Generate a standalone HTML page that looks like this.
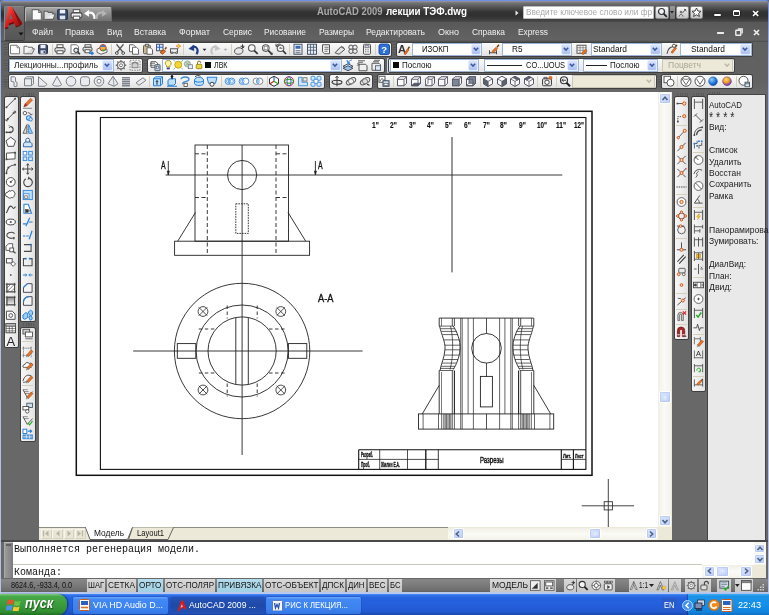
<!DOCTYPE html>
<html><head><meta charset="utf-8"><title>AutoCAD 2009</title>
<style>
*{box-sizing:border-box;margin:0;padding:0}
html,body{width:769px;height:615px;overflow:hidden}
body{position:relative;background:#686868;font-family:"Liberation Sans",sans-serif;font-size:9px;color:#000}
#root{position:absolute;left:0;top:0;width:769px;height:615px;overflow:hidden;will-change:transform}
.a{position:absolute}
.t{position:absolute;white-space:nowrap;transform-origin:0 0;display:block}
.tb{background:linear-gradient(#fafafa,#ededed 60%,#e2e2e2);border-radius:1.5px;box-shadow:0 0 0 1px #3f3f3f}
.tbv{background:linear-gradient(90deg,#f6f6f6,#ececec 60%,#e2e2e2);border-radius:1.5px;box-shadow:0 0 0 1px #3f3f3f}
.grip{background:repeating-linear-gradient(#4b4b4b 0,#4b4b4b 1.3px,#666 1.3px,#666 2.6px);border-radius:1px;opacity:.55}
.griph{background:repeating-linear-gradient(90deg,#4b4b4b 0,#4b4b4b 1.3px,#666 1.3px,#666 2.6px);border-radius:1px;opacity:.55}
.sep{background:#d4cfbb}
.cb{background:#fff;border:1px solid #9db6d8}
.cbd{background:#ece9d8;border:1px solid #c9c7ba}
.btn{background:linear-gradient(#d9e4fd,#c0d1f8 50%,#adc2f2);border:1px solid #e6edfc;border-radius:2px}
.sbtn{background:linear-gradient(135deg,#dbe5fd,#bfd0f8);border:1px solid #fff;border-radius:2px;box-shadow:0 0 0 .5px #a9bcea inset}
.st{background:linear-gradient(#d8d8d8,#c6c6c6);}
.st.on{background:linear-gradient(#b4dcec,#9fd0e4)}
</style></head>
<body>
<div id="root">
<div class="a" style="left:0px;top:0px;width:769px;height:594px;background:linear-gradient(#6f8fe6 0,#7f9fe8 4%,#a9bbe8 10%,#b4c2e6 100%);border-radius:4px 4px 0 0"></div>
<div class="a" style="left:1px;top:1px;width:767.3px;height:591.5px;background:#686868;border-radius:3px 3px 0 0"></div>
<div class="a" style="left:1px;top:1px;width:767.3px;height:21px;background:linear-gradient(#96989d 0,#737476 9%,#565657 28%,#343434 52%,#303030 68%,#3a3a3a 85%,#4b4b4b 100%);border-radius:3px 3px 0 0"></div>
<div class="a" style="left:1px;top:22px;width:767.3px;height:19.5px;background:linear-gradient(#585858,#5d5d5d 40%,#626262 90%,#4a4a4a 100%)"></div>
<div class="a" style="left:1px;top:41.5px;width:767.3px;height:50.5px;background:linear-gradient(#606060,#626262 80%,#686868)"></div>
<div class="a" style="left:4px;top:5.5px;width:20.5px;height:35px;background:linear-gradient(#7a7a7a,#5f5f5f 60%,#555);border:1px solid #868686;border-right-color:#444;border-bottom-color:#3e3e3e;border-radius:2px"></div>
<svg class="a" style="left:4px;top:5px;" width="20" height="26" viewBox="0 0 20 26"><defs><linearGradient id="ra" x1="0" y1="0" x2="1" y2="1"><stop offset="0" stop-color="#ff6a58"/><stop offset=".45" stop-color="#e02020"/><stop offset="1" stop-color="#a00c0c"/></linearGradient></defs><path d="M8 1.700L18.300 18L15 20.300Z" fill="#8e0a0a"/><path d="M4.800 18.300L9.800 16.500L10.600 18.300L4.500 20.600Z" fill="#7a0606"/><path d="M4.300 1.700L8 1.700L15 20.300L11.500 21.600L9.800 16.500L4.800 18.300L4 22L.7 23Z" fill="url(#ra)"/><path d="M6.300 8L8.500 13.500L5.300 14.700Z" fill="#6a6a6a"/><path d="M.7 23L4 22L4.500 23.300L1.500 24.300Z" fill="#7a0606"/><path d="M11.500 21.600L15 20.300L18.300 18L18.300 19L15.200 21.300L11.800 22.600Z" fill="#6e0505"/></svg>
<svg class="a" style="left:17.5px;top:31.5px;" width="6" height="4" viewBox="0 0 6 4"><path d="M.5 .5h5l-2.500 3z" fill="#111"/></svg>
<div class="a" style="left:25px;top:6.5px;width:86.5px;height:15.5px;background:linear-gradient(#a7a7a7,#8c8c8c 45%,#717171);border:1px solid #b9b9b9;border-bottom-color:#5a5a5a;border-right-color:#6a6a6a;border-radius:2px 2px 0 0"></div>
<svg class="a" style="left:29.5px;top:7.7px;" width="13" height="13" viewBox="0 0 12 12"><path d="M2 1.500h6l2.500 2.500v7h-8.500z" stroke="#6b6b6b" fill="#fbfbfb"/><path d="M8 1.500v2.500h2.500" stroke="#777" fill="none"/></svg>
<svg class="a" style="left:42.5px;top:7.7px;" width="13" height="13" viewBox="0 0 12 12"><path d="M1 10.500l1.800-5h8.500l-2 5z" stroke="#606060" fill="#efefef"/><path d="M1 10.500v-7.500h3l1 1h4v1.500" stroke="#606060" fill="#dcdcdc"/></svg>
<svg class="a" style="left:56.0px;top:7.7px;" width="13" height="13" viewBox="0 0 12 12"><rect x="1.500" y="1.500" width="9" height="9" rx="1" stroke="#27344f" fill="#3a4b70"/><rect x="3.500" y="1.500" width="5" height="3.500" fill="#eef2f8"/><rect x="3.500" y="7" width="5" height="3.500" fill="#dde4ef"/></svg>
<svg class="a" style="left:69.5px;top:7.7px;" width="13" height="13" viewBox="0 0 12 12"><rect x="3" y="1.500" width="6" height="3" stroke="#555" fill="#fff"/><rect x="1" y="4.500" width="10" height="4.500" rx="1.500" stroke="#444" fill="#f2f2f2"/><rect x="3" y="7.500" width="6" height="3" stroke="#555" fill="#fff"/></svg>
<svg class="a" style="left:82.5px;top:7.7px;" width="13" height="13" viewBox="0 0 12 12"><path d="M10.500 10c.5-4.500-2-6.500-6-5.500" stroke="#fff" fill="none" stroke-width="2"/><path d="M1 5l4.500-3.500v6.500z" fill="#fff"/></svg>
<svg class="a" style="left:95.0px;top:7.7px;" width="13" height="13" viewBox="0 0 12 12"><path d="M1.500 10c-.5-4.500 2-6.500 6-5.500" stroke="#b4b4b4" fill="none" stroke-width="2"/><path d="M11 5l-4.500-3.500v6.500z" fill="#b4b4b4"/></svg>
<span class="t" style="left:317px;top:6.3px;font-size:10px;line-height:12px;color:#a9a9a9;font-weight:bold;transform:scaleX(0.943);">AutoCAD 2009</span>
<span class="t" style="left:385.5px;top:6.3px;font-size:10px;line-height:12px;color:#ffffff;font-weight:bold;transform:scaleX(0.983);">лекции ТЭФ.dwg</span>
<svg class="a" style="left:514.5px;top:10px;" width="4" height="6" viewBox="0 0 4 6"><path d="M.5 .5l3 2.500-3 2.500z" fill="#e8e8e8"/></svg>
<div class="a" style="left:522.5px;top:5.5px;width:131.5px;height:13.5px;background:#fff;border:1px solid #bdbdbd;border-radius:1px"></div>
<span class="t" style="left:526px;top:7px;font-size:9px;line-height:11px;color:#a9a9a9;transform:scaleX(0.918);">Введите ключевое слово или фр</span>
<div class="a" style="left:655px;top:5.5px;width:14px;height:13.5px;background:linear-gradient(#fdfdfd,#dcdcdc 50%,#c4c4c4);border:1px solid #8a8a8a;border-radius:2px"></div>
<svg class="a" style="left:656.5px;top:6.5px;" width="11" height="11" viewBox="0 0 11 11"><circle cx="4.500" cy="4.500" r="3" stroke="#333" fill="#eef3f8" stroke-width="1.200"/><path d="M6.800 6.800l3 3" stroke="#222" stroke-width="1.800"/></svg>
<div class="a" style="left:669.5px;top:5.5px;width:5px;height:13.5px;background:linear-gradient(#999,#777);border-radius:1px"></div>
<svg class="a" style="left:670px;top:11px;" width="4" height="3" viewBox="0 0 4 3"><path d="M0 0h4l-2 2.500z" fill="#222"/></svg>
<div class="a" style="left:675.5px;top:5.5px;width:13px;height:13.5px;background:linear-gradient(#fdfdfd,#dcdcdc 50%,#c4c4c4);border:1px solid #8a8a8a;border-radius:2px"></div>
<svg class="a" style="left:676.5px;top:6.5px;" width="11" height="11" viewBox="0 0 11 11"><path d="M2 9.500c1.500-3 3-3 4 0M5.500 6l3.500-4M7 2l2.500 2" stroke="#555" fill="none" stroke-width="1"/><circle cx="4" cy="5" r="1.300" fill="#777"/></svg>
<div class="a" style="left:689.5px;top:5.5px;width:13px;height:13.5px;background:linear-gradient(#fdfdfd,#dcdcdc 50%,#c4c4c4);border:1px solid #8a8a8a;border-radius:2px"></div>
<svg class="a" style="left:690.5px;top:6.5px;" width="11" height="11" viewBox="0 0 11 11"><path d="M5.500 1l1.400 3 3.100.3-2.400 2.100.8 3.100-2.900-1.700-2.900 1.700.8-3.100-2.400-2.100 3.100-.3z" stroke="#333" fill="#fff" stroke-width=".9"/></svg>
<div class="a" style="left:713.8px;top:13.5px;width:7.5px;height:2.7px;background:#fff;border-radius:1px;box-shadow:0 0 1.5px #000"></div>
<div class="a" style="left:733px;top:10.3px;width:7.2px;height:6px;border:1.900px solid #fff;border-top-width:2.300px;border-radius:1.500px;box-shadow:0 0 1.5px #000"></div>
<svg class="a" style="left:752px;top:10px;" width="7.5" height="7" viewBox="0 0 7.5 7"><path d="M1 1l5.200 4.800M6.200 1l-5.200 4.800" stroke="#111" stroke-width="2.800" opacity=".5"/><path d="M1 1l5.200 4.800M6.200 1l-5.200 4.800" stroke="#fff" stroke-width="1.700"/></svg>
<div class="a" style="left:717px;top:32px;width:7px;height:2.4px;background:#ececec;border-radius:.5px"></div>
<svg class="a" style="left:734.5px;top:27.5px;" width="8" height="8" viewBox="0 0 8 8"><rect x=".8" y="2.200" width="5" height="5" stroke="#eee" fill="none" stroke-width="1.400" rx=".5"/><path d="M2.800 1h4.400v4.400" stroke="#eee" fill="none" stroke-width="1.300"/></svg>
<svg class="a" style="left:753px;top:28.5px;" width="7" height="7" viewBox="0 0 7 7"><path d="M1 1l5 5M6 1l-5 5" stroke="#eee" stroke-width="1.700"/></svg>
<span class="t" style="left:32px;top:26.9px;font-size:9.2px;line-height:11.2px;color:#f0f0f0;transform:scaleX(0.929);">Файл</span>
<span class="t" style="left:65px;top:26.9px;font-size:9.2px;line-height:11.2px;color:#f0f0f0;transform:scaleX(0.934);">Правка</span>
<span class="t" style="left:107px;top:26.9px;font-size:9.2px;line-height:11.2px;color:#f0f0f0;transform:scaleX(0.902);">Вид</span>
<span class="t" style="left:134px;top:26.9px;font-size:9.2px;line-height:11.2px;color:#f0f0f0;transform:scaleX(0.937);">Вставка</span>
<span class="t" style="left:179px;top:26.9px;font-size:9.2px;line-height:11.2px;color:#f0f0f0;transform:scaleX(0.950);">Формат</span>
<span class="t" style="left:223px;top:26.9px;font-size:9.2px;line-height:11.2px;color:#f0f0f0;transform:scaleX(0.922);">Сервис</span>
<span class="t" style="left:264px;top:26.9px;font-size:9.2px;line-height:11.2px;color:#f0f0f0;transform:scaleX(0.907);">Рисование</span>
<span class="t" style="left:319px;top:26.9px;font-size:9.2px;line-height:11.2px;color:#f0f0f0;transform:scaleX(0.917);">Размеры</span>
<span class="t" style="left:366px;top:26.9px;font-size:9.2px;line-height:11.2px;color:#f0f0f0;transform:scaleX(0.930);">Редактировать</span>
<span class="t" style="left:438px;top:26.9px;font-size:9.2px;line-height:11.2px;color:#f0f0f0;transform:scaleX(0.983);">Окно</span>
<span class="t" style="left:472px;top:26.9px;font-size:9.2px;line-height:11.2px;color:#f0f0f0;transform:scaleX(0.915);">Справка</span>
<span class="t" style="left:518px;top:26.9px;font-size:9.2px;line-height:11.2px;color:#f0f0f0;transform:scaleX(0.904);">Express</span>
<div class="a grip" style="left:4px;top:43.7px;width:3px;height:11px;"></div>
<div class="a tb" style="left:8.5px;top:42.5px;width:382px;height:13.5px;"></div>
<svg class="a" style="left:9.0px;top:42.85px;overflow:visible" width="12" height="12.5" viewBox="0 0 12 12"><path d="M1.5 2h6.500l2.500 2.500v6h-9z" stroke="#7d7d7d" fill="#fdfdfd" stroke-width="1" /><path d="M8 2v2.500h2.500" stroke="#8a8a8a" fill="none" stroke-width="1" /></svg>
<svg class="a" style="left:23.0px;top:42.85px;overflow:visible" width="12" height="12.5" viewBox="0 0 12 12"><path d="M1 10.500l2-5h8.500l-2.300 5z" stroke="#6e6e6e" fill="#dcdcdc" stroke-width="1" /><path d="M1 10.500v-7.500h3l1 1h4.500v1.500" stroke="#6e6e6e" fill="#f4f4f4" stroke-width="1" /></svg>
<svg class="a" style="left:37.0px;top:42.85px;overflow:visible" width="12" height="12.5" viewBox="0 0 12 12"><rect x="1.5" y="1.5" width="9" height="9" stroke="#2b3552" fill="#3b4766" stroke-width="1" rx="1"/><rect x="3.5" y="1.5" width="5" height="3.5" stroke="none" fill="#eef0f6" stroke-width="0" rx="0"/><rect x="3.5" y="7" width="5" height="3.5" stroke="none" fill="#d9dde8" stroke-width="0" rx="0"/><rect x="6.5" y="7.8" width="1.4" height="2.2" stroke="none" fill="#3b4766" stroke-width="0" rx="0"/></svg>
<svg class="a" style="left:54.0px;top:42.85px;overflow:visible" width="12" height="12.5" viewBox="0 0 12 12"><rect x="3" y="1.5" width="6" height="3" stroke="#555" fill="#fff" stroke-width="1" rx="0"/><rect x="1" y="4.5" width="10" height="4.5" stroke="#444" fill="#e2e2e2" stroke-width="1" rx="1.5"/><rect x="3" y="7.5" width="6" height="3" stroke="#555" fill="#fff" stroke-width="1" rx="0"/></svg>
<svg class="a" style="left:68.5px;top:42.85px;overflow:visible" width="12" height="12.5" viewBox="0 0 12 12"><path d="M2 1.5h5.5l2 2v7h-7.5z" stroke="#777" fill="#fff" stroke-width="1" /><circle cx="7" cy="7" r="2.2" stroke="#333" fill="#dfeaf5" stroke-width="1"/><path d="M8.6 8.6l2.4 2.4" stroke="#333" fill="none" stroke-width="1.4" /></svg>
<svg class="a" style="left:82.0px;top:42.85px;overflow:visible" width="12" height="12.5" viewBox="0 0 12 12"><rect x="3" y="1.5" width="6" height="2.5" stroke="#555" fill="#fff" stroke-width="1" rx="0"/><rect x="1" y="4" width="9" height="4" stroke="#444" fill="#e2e2e2" stroke-width="1" rx="1.5"/><rect x="3" y="6.5" width="5" height="3" stroke="#555" fill="#fff" stroke-width="1" rx="0"/><path d="M7 10h4M9.5 8.5l1.5 1.5-1.5 1.5" stroke="#2a7fd4" fill="none" stroke-width="1.6" /></svg>
<svg class="a" style="left:96.0px;top:42.85px;overflow:visible" width="12" height="12.5" viewBox="0 0 12 12"><path d="M1 6l4-2 6 2v3l-6 2-4-2z" stroke="#666" fill="#f4f4f4" stroke-width="1" /><circle cx="7" cy="4.5" r="3.2" stroke="#c33" fill="#f4b73c" stroke-width="1"/><path d="M5 3.5a3 3 0 0 1 4 0" stroke="#2a7fd4" fill="none" stroke-width="1.6" /><path d="M6 6.5a2 2 0 0 0 3 0" stroke="#3a3" fill="none" stroke-width="1.4" /></svg>
<svg class="a" style="left:113.5px;top:42.85px;overflow:visible" width="12" height="12.5" viewBox="0 0 12 12"><path d="M2.500 1l6.500 8M9.500 1l-6.500 8" stroke="#555" fill="none" stroke-width="1.2" /><circle cx="2.8" cy="9.8" r="1.4" stroke="#555" fill="none" stroke-width="1"/><circle cx="9.2" cy="9.8" r="1.4" stroke="#555" fill="none" stroke-width="1"/></svg>
<svg class="a" style="left:127.5px;top:42.85px;overflow:visible" width="12" height="12.5" viewBox="0 0 12 12"><path d="M1.5 1.5h4l2 2v5h-6z" stroke="#666" fill="#fff" stroke-width="1" /><path d="M4.5 4h4l2 2v5h-6z" stroke="#666" fill="#fff" stroke-width="1" /></svg>
<svg class="a" style="left:141.5px;top:42.85px;overflow:visible" width="12" height="12.5" viewBox="0 0 12 12"><rect x="1.5" y="2" width="7" height="8.5" stroke="#6b5a3a" fill="#c9b998" stroke-width="1" rx="1"/><rect x="3.5" y="1" width="3" height="2" stroke="#666" fill="#ddd" stroke-width="1" rx="0"/><path d="M5 4.5h3.5l2 2v4.5h-5.5z" stroke="#666" fill="#fff" stroke-width="1" /></svg>
<svg class="a" style="left:155.0px;top:42.85px;overflow:visible" width="12" height="12.5" viewBox="0 0 12 12"><rect x="1.5" y="1" width="6.5" height="6.5" stroke="#556" fill="#dfe8f5" stroke-width="1" rx="0"/><path d="M1.5 4h6.5M4.5 1v6.5" stroke="#36c" fill="none" stroke-width="1" /><path d="M5 9l4-2.5 1.5 1.5-3 3z" stroke="#a40" fill="#e8742a" stroke-width="1" /><path d="M10 6l1.5-2" stroke="#741" fill="none" stroke-width="1.4" /></svg>
<svg class="a" style="left:169.0px;top:42.85px;overflow:visible" width="12" height="12.5" viewBox="0 0 12 12"><rect x="1.5" y="5.5" width="7" height="4" stroke="#555" fill="#eee" stroke-width="1" rx="0"/><circle cx="3" cy="9.5" r="0.9" stroke="#555" fill="#fff" stroke-width="1"/><circle cx="7.5" cy="9.5" r="0.9" stroke="#555" fill="#fff" stroke-width="1"/><path d="M9.5 .5l.8 1.8 1.7.5-1.7.6-.8 1.8-.8-1.8-1.7-.6 1.7-.5z" stroke="#e8742a" fill="#f5d536" stroke-width="0.6" /></svg>
<svg class="a" style="left:188.0px;top:42.85px;overflow:visible" width="12" height="12.5" viewBox="0 0 12 12"><path d="M8.500 11c2.500-4 .5-8.500-4-7.500" stroke="#1d3c86" fill="none" stroke-width="2.1" /><path d="M.8 5.500l5-3.800 .2 5.800z" stroke="#1d3c86" fill="#1d3c86" stroke-width="0.4" /></svg>
<svg class="a" style="left:200.0px;top:44.6px;overflow:visible" width="9" height="9" viewBox="0 0 12 12"><path d="M3.5 5h5l-2.5 3z" stroke="#223" fill="#223" stroke-width="0" /></svg>
<svg class="a" style="left:208.5px;top:42.85px;overflow:visible" width="12" height="12.5" viewBox="0 0 12 12"><path d="M3.500 11c-2.500-4-.5-8.500 4-7.500" stroke="#c4c4c4" fill="none" stroke-width="2.1" /><path d="M11.200 5.500l-5-3.800-.2 5.800z" stroke="#c4c4c4" fill="#c4c4c4" stroke-width="0.4" /></svg>
<svg class="a" style="left:220.5px;top:44.6px;overflow:visible" width="9" height="9" viewBox="0 0 12 12"><path d="M3.5 5h5l-2.5 3z" stroke="#aaa" fill="#aaa" stroke-width="0" /></svg>
<svg class="a" style="left:232.5px;top:42.85px;overflow:visible" width="12" height="12.5" viewBox="0 0 12 12"><path d="M1.5 8c0-2 2-3.5 4.5-3.5s4 1 4 3-2 3.5-4.5 3.5-4-1-4-3z" stroke="#555" fill="#e6e6e6" stroke-width="1" /><path d="M8 5.5l3-1.5M9.5 1v4M7.5 3h4" stroke="#444" fill="none" stroke-width="1" /></svg>
<svg class="a" style="left:246.5px;top:42.85px;overflow:visible" width="12" height="12.5" viewBox="0 0 12 12"><circle cx="4.8" cy="4.8" r="3.3" stroke="#555" fill="#f4f8fb" stroke-width="1.1"/><path d="M7.300 7.300l3.400 3.400" stroke="#333" fill="none" stroke-width="1.7" /></svg>
<svg class="a" style="left:260.5px;top:42.85px;overflow:visible" width="12" height="12.5" viewBox="0 0 12 12"><circle cx="4.8" cy="4.8" r="3.3" stroke="#555" fill="#f4f8fb" stroke-width="1.1"/><path d="M7.300 7.300l3.400 3.400" stroke="#333" fill="none" stroke-width="1.7" /><rect x="3.2" y="3.2" width="3.2" height="3.2" stroke="#888" fill="none" stroke-width="0.7" rx="0"/><path d="M9.500 11.500h2v-2z" stroke="#333" fill="#333" stroke-width="0.3" /></svg>
<svg class="a" style="left:274.5px;top:42.85px;overflow:visible" width="12" height="12.5" viewBox="0 0 12 12"><circle cx="5.5" cy="5" r="3.3" stroke="#555" fill="#f4f8fb" stroke-width="1.1"/><path d="M8 7.500l3 3.300" stroke="#333" fill="none" stroke-width="1.7" /><path d="M1 3c1-2 3-2.500 4.500-2M1 .5v2.500h2.500" stroke="#444" fill="none" stroke-width="0.9" /><path d="M4.500 5h3M4.500 5l1.200-1.200" stroke="#444" fill="none" stroke-width="0.8" /></svg>
<svg class="a" style="left:292.0px;top:42.85px;overflow:visible" width="12" height="12.5" viewBox="0 0 12 12"><rect x="2" y="1" width="8" height="10" stroke="#456" fill="#f4f7fb" stroke-width="1" rx="0"/><rect x="3.5" y="2.5" width="5" height="3" stroke="none" fill="#3b68b5" stroke-width="0" rx="0"/><path d="M3.5 7.5h5M3.5 9.5h5" stroke="#667" fill="none" stroke-width="1" /></svg>
<svg class="a" style="left:306.0px;top:42.85px;overflow:visible" width="12" height="12.5" viewBox="0 0 12 12"><rect x="1.5" y="1" width="9" height="10" stroke="#456" fill="#e8eef6" stroke-width="1" rx="0"/><path d="M1.5 4h9M1.5 7h9M4.5 1v10M7.5 1v10" stroke="#567" fill="none" stroke-width="0.9" /></svg>
<svg class="a" style="left:319.5px;top:42.85px;overflow:visible" width="12" height="12.5" viewBox="0 0 12 12"><path d="M2.5 1.5h7v9h-5l-2-2z" stroke="#555" fill="#f2f2f2" stroke-width="1" /><path d="M4.5 4h4M4.5 6h4M4.5 8h3" stroke="#777" fill="none" stroke-width="1" /></svg>
<svg class="a" style="left:333.5px;top:42.85px;overflow:visible" width="12" height="12.5" viewBox="0 0 12 12"><path d="M1 9.5l6-6 4 2.5-6 5z" stroke="#555" fill="#e4e4e4" stroke-width="1" /><path d="M2.5 8l5-5 2.5 1.5" stroke="#666" fill="none" stroke-width="0.9" /></svg>
<svg class="a" style="left:347.0px;top:42.85px;overflow:visible" width="12" height="12.5" viewBox="0 0 12 12"><circle cx="4" cy="4" r="2.2" stroke="#555" fill="#eee" stroke-width="1"/><circle cx="8" cy="4" r="2.2" stroke="#555" fill="#eee" stroke-width="1"/><circle cx="4" cy="8" r="2.2" stroke="#555" fill="#eee" stroke-width="1"/><circle cx="8" cy="8" r="2.2" stroke="#555" fill="#eee" stroke-width="1"/></svg>
<svg class="a" style="left:361.0px;top:42.85px;overflow:visible" width="12" height="12.5" viewBox="0 0 12 12"><rect x="2.5" y="1" width="7" height="10" stroke="#555" fill="#f2f2f2" stroke-width="1" rx="1"/><rect x="4" y="2.5" width="4" height="2" stroke="#667" fill="#dfe8f0" stroke-width="0.8" rx="0"/><path d="M4 6.5h4M4 8.5h4" stroke="#777" fill="none" stroke-width="1.2" stroke-dasharray="1 .6"/></svg>
<svg class="a" style="left:378.0px;top:42.85px;overflow:visible" width="12" height="12.5" viewBox="0 0 12 12"><rect x="1" y="0.8" width="10.5" height="10.5" stroke="#1c4fa8" fill="#2f6fd6" stroke-width="1" rx="2"/><text x="6.200" y="9.400" font-family="Liberation Sans" font-weight="bold" font-size="9.500" fill="#fff" text-anchor="middle">?</text></svg>
<div class="a sep" style="left:51.5px;top:43.7px;width:1px;height:11px;"></div>
<div class="a sep" style="left:111px;top:43.7px;width:1px;height:11px;"></div>
<div class="a sep" style="left:183px;top:43.7px;width:1px;height:11px;"></div>
<div class="a sep" style="left:231px;top:43.7px;width:1px;height:11px;"></div>
<div class="a sep" style="left:289px;top:43.7px;width:1px;height:11px;"></div>
<div class="a sep" style="left:375px;top:43.7px;width:1px;height:11px;"></div>
<div class="a grip" style="left:392.5px;top:43.7px;width:3px;height:11px;"></div>
<div class="a tb" style="left:397px;top:42.5px;width:355px;height:13.5px;"></div>
<svg class="a" style="left:398.0px;top:42.85px;overflow:visible" width="12" height="12.5" viewBox="0 0 12 12"><text x="0" y="10" font-family="Liberation Sans" font-weight="bold" font-size="11" fill="#333">A</text><path d="M6 10.5l3.5-5 1.5 1-3.5 5z" stroke="#a40" fill="#e8742a" stroke-width="0.6" /><path d="M10 5.5l1.5-2" stroke="#630" fill="none" stroke-width="1.3" /></svg>
<div class="a cb" style="left:412px;top:42.8px;width:70px;height:13px;"></div><div class="a btn" style="left:470.5px;top:43.8px;width:10.5px;height:11px;"></div><svg class="a" style="left:472.8px;top:47.0px;" width="6" height="5" viewBox="0 0 6 5"><path d="M.8 .8l2.200 2.300 2.200-2.300" stroke="#3c5a9a" fill="none" stroke-width="1.500"/></svg>
<span class="t" style="left:422px;top:44.3px;font-size:9px;line-height:11px;color:#111;transform:scaleX(0.868);">ИЗОКП</span>
<svg class="a" style="left:488.0px;top:42.85px;overflow:visible" width="12" height="12.5" viewBox="0 0 12 12"><path d="M1 9.5h8M1.5 7v4M8.5 7v4" stroke="#484848" fill="none" stroke-width="1" /><path d="M4 8l4-4 1.5 1.5-4 4z" stroke="#a40" fill="#e8742a" stroke-width="0.6" /><path d="M9 4l2-2.5" stroke="#630" fill="none" stroke-width="1.3" /></svg>
<div class="a cb" style="left:502px;top:42.8px;width:70px;height:13px;"></div><div class="a btn" style="left:560.5px;top:43.8px;width:10.5px;height:11px;"></div><svg class="a" style="left:562.8px;top:47.0px;" width="6" height="5" viewBox="0 0 6 5"><path d="M.8 .8l2.200 2.300 2.200-2.300" stroke="#3c5a9a" fill="none" stroke-width="1.500"/></svg>
<span class="t" style="left:512px;top:44.3px;font-size:9px;line-height:11px;color:#111;transform:scaleX(0.912);">R5</span>
<svg class="a" style="left:576.0px;top:42.85px;overflow:visible" width="12" height="12.5" viewBox="0 0 12 12"><rect x="1" y="2" width="9" height="8" stroke="#555" fill="#fff" stroke-width="1" rx="0"/><path d="M1 4.5h9M1 7h9M4 2v8M7 2v8" stroke="#777" fill="none" stroke-width="0.8" /><path d="M5.5 10l4-4 1.5 1.5-4 4z" stroke="#a40" fill="#e8742a" stroke-width="0.6" /></svg>
<div class="a cb" style="left:590.5px;top:42.8px;width:71px;height:13px;"></div><div class="a btn" style="left:650.0px;top:43.8px;width:10.5px;height:11px;"></div><svg class="a" style="left:652.3px;top:47.0px;" width="6" height="5" viewBox="0 0 6 5"><path d="M.8 .8l2.200 2.300 2.200-2.300" stroke="#3c5a9a" fill="none" stroke-width="1.500"/></svg>
<span class="t" style="left:593px;top:44.3px;font-size:9px;line-height:11px;color:#111;transform:scaleX(0.931);">Standard</span>
<svg class="a" style="left:666.0px;top:42.85px;overflow:visible" width="12" height="12.5" viewBox="0 0 12 12"><path d="M1 10.5c1-5 3-7 6-7" stroke="#484848" fill="none" stroke-width="1.1" /><path d="M5 9l4-5 1.5 1-4 5z" stroke="#a40" fill="#e8742a" stroke-width="0.6" /><path d="M9.5 4l1.5-2.5" stroke="#630" fill="none" stroke-width="1.3" /><circle cx="8" cy="2.5" r="1.6" stroke="#555" fill="#fff" stroke-width="1"/></svg>
<div class="a cb" style="left:680px;top:42.8px;width:71.5px;height:13px;"></div><div class="a btn" style="left:740.0px;top:43.8px;width:10.5px;height:11px;"></div><svg class="a" style="left:742.3px;top:47.0px;" width="6" height="5" viewBox="0 0 6 5"><path d="M.8 .8l2.200 2.300 2.200-2.300" stroke="#3c5a9a" fill="none" stroke-width="1.500"/></svg>
<span class="t" style="left:691px;top:44.3px;font-size:9px;line-height:11px;color:#111;transform:scaleX(0.931);">Standard</span>
<div class="a grip" style="left:4px;top:59.7px;width:3px;height:11px;"></div>
<div class="a tb" style="left:8.5px;top:58.5px;width:133px;height:13.5px;"></div>
<div class="a cb" style="left:9px;top:58.8px;width:104.5px;height:13px;"></div><div class="a btn" style="left:102.0px;top:59.8px;width:10.5px;height:11px;"></div><svg class="a" style="left:104.3px;top:63.0px;" width="6" height="5" viewBox="0 0 6 5"><path d="M.8 .8l2.200 2.300 2.200-2.300" stroke="#3c5a9a" fill="none" stroke-width="1.500"/></svg>
<span class="t" style="left:14px;top:60.3px;font-size:9px;line-height:11px;color:#222;transform:scaleX(0.921);">Лекционны...профиль</span>
<svg class="a" style="left:115.0px;top:58.85px;overflow:visible" width="12" height="12.5" viewBox="0 0 12 12"><circle cx="6" cy="6" r="3.6" stroke="#6e6e6e" fill="#f4f4f4" stroke-width="1.2"/><circle cx="6" cy="6" r="1.5" stroke="#6e6e6e" fill="#fff" stroke-width="0.9"/><path d="M6 .8v1.800M6 9.400v1.800M.8 6h1.800M9.400 6h1.800M2.300 2.300l1.300 1.300M8.400 8.400l1.300 1.300M2.300 9.700l1.300-1.300M8.400 3.600l1.300-1.300" stroke="#6e6e6e" fill="none" stroke-width="1.3" /></svg>
<svg class="a" style="left:129.0px;top:58.85px;overflow:visible" width="12" height="12.5" viewBox="0 0 12 12"><rect x="3" y="3.5" width="6" height="5" stroke="#777" fill="#d0d0d0" stroke-width="0.8" rx="0"/><path d="M1 1h10v10h-10z" stroke="#777" fill="none" stroke-width="0.9" stroke-dasharray="1.500 1.200"/><path d="M3 5l3-2.500 3 2.500" stroke="#666" fill="none" stroke-width="0.8" /></svg>
<div class="a grip" style="left:144px;top:59.7px;width:3px;height:11px;"></div>
<div class="a tb" style="left:148px;top:58.5px;width:236px;height:13.5px;"></div>
<svg class="a" style="left:149.0px;top:58.85px;overflow:visible" width="12" height="12.5" viewBox="0 0 12 12"><path d="M2 2.5h5l1.5 1.5v4h-6.5z" stroke="#555" fill="#fff" stroke-width="1" /><path d="M1 4h5M1 6h5" stroke="#555" fill="none" stroke-width="0.8" /><rect x="6" y="5.5" width="5" height="6" stroke="#456" fill="#c7d6ea" stroke-width="1" rx="0.5"/><rect x="7.5" y="7" width="2" height="2" stroke="#456" fill="#fff" stroke-width="0.6" rx="0"/></svg>
<div class="a cb" style="left:161.5px;top:58.8px;width:180px;height:13px;"></div><div class="a btn" style="left:330.0px;top:59.8px;width:10.5px;height:11px;"></div><svg class="a" style="left:332.3px;top:63.0px;" width="6" height="5" viewBox="0 0 6 5"><path d="M.8 .8l2.200 2.300 2.200-2.300" stroke="#3c5a9a" fill="none" stroke-width="1.500"/></svg>
<svg class="a" style="left:163.25px;top:59.35px;overflow:visible" width="10.5" height="11.5" viewBox="0 0 12 12"><path d="M6 1a3.3 3.3 0 0 1 2 6v1.5h-4v-1.5a3.3 3.3 0 0 1 2-6z" stroke="#a89020" fill="#fdf6a8" stroke-width="1" /><path d="M4.5 9.5h3v1.5h-3z" stroke="#335" fill="#3d5fa8" stroke-width="0.5" /></svg>
<svg class="a" style="left:172.75px;top:59.35px;overflow:visible" width="10.5" height="11.5" viewBox="0 0 12 12"><circle cx="6" cy="6" r="4" stroke="#b8a000" fill="#f5d536" stroke-width="1"/><path d="M.5 .5l2 2M11.5 .5l-2 2M.5 11.5l2-2M11.5 11.5l-2-2" stroke="#7aa" fill="1" stroke-width="1" /></svg>
<svg class="a" style="left:182.75px;top:59.35px;overflow:visible" width="10.5" height="11.5" viewBox="0 0 12 12"><circle cx="5" cy="5" r="3.5" stroke="#8a9" fill="#cdd8b8" stroke-width="1"/><rect x="6" y="6" width="5" height="4.5" stroke="#667" fill="#e8eef8" stroke-width="0.8" rx="0"/><path d="M3 3l4 4M7 3l-4 4" stroke="#79a" fill="none" stroke-width="0.8" /></svg>
<svg class="a" style="left:194.25px;top:59.35px;overflow:visible" width="10.5" height="11.5" viewBox="0 0 12 12"><rect x="2.5" y="5.5" width="6.5" height="5" stroke="#8a7a10" fill="#e8d93a" stroke-width="0.9" rx="1"/><path d="M4 5.500v-1.800a1.800 1.800 0 0 1 3.600 0v.6" stroke="#7a6a10" fill="none" stroke-width="1.1" /></svg>
<div class="a" style="left:204.5px;top:62.1px;width:6px;height:6.4px;background:#0a0a0a"></div>
<span class="t" style="left:213.5px;top:60.3px;font-size:9px;line-height:11px;color:#111;transform:scaleX(0.787);">ЛВК</span>
<svg class="a" style="left:342.0px;top:58.85px;overflow:visible" width="12" height="12.5" viewBox="0 0 12 12"><path d="M1 7l5-2.5 5 2.5-5 2.5z" stroke="#456" fill="#cfe0f4" stroke-width="1" /><path d="M1 9l5-2.5 5 2.5-5 2.5z" stroke="#456" fill="#9cc0ea" stroke-width="1" /><path d="M5 1l3 3-2 .5z M7 2l3-1.5" stroke="#2a7fd4" fill="#5b9bd8" stroke-width="0.8" /></svg>
<svg class="a" style="left:356.0px;top:58.85px;overflow:visible" width="12" height="12.5" viewBox="0 0 12 12"><path d="M3 5h6.5l1.5 1.5v5h-8z" stroke="#555" fill="#f0f0f0" stroke-width="1" /><path d="M2 3h5M2 1.5h7" stroke="#555" fill="none" stroke-width="0.9" /><path d="M1 6.5l2-2M1 4.5h2v2" stroke="#555" fill="none" stroke-width="0.8" /></svg>
<svg class="a" style="left:370.0px;top:58.85px;overflow:visible" width="12" height="12.5" viewBox="0 0 12 12"><path d="M2 4h7l1.5 1.5v5.5h-8.5z" stroke="#555" fill="#f0f0f0" stroke-width="1" /><rect x="5.5" y="6.5" width="5" height="4.5" stroke="#456" fill="#dde6f2" stroke-width="0.8" rx="0"/><path d="M3 2.5h6M4 1h6" stroke="#555" fill="none" stroke-width="0.9" /></svg>
<div class="a" style="left:386.5px;top:58.0px;width:2.5px;height:14.5px;background:#c7d5f0;border-radius:1px"></div>
<div class="a tb" style="left:389px;top:58.5px;width:344.5px;height:13.5px;"></div>
<div class="a cb" style="left:389.5px;top:58.8px;width:89.5px;height:13px;"></div><div class="a btn" style="left:467.5px;top:59.8px;width:10.5px;height:11px;"></div><svg class="a" style="left:469.8px;top:63.0px;" width="6" height="5" viewBox="0 0 6 5"><path d="M.8 .8l2.200 2.300 2.200-2.300" stroke="#3c5a9a" fill="none" stroke-width="1.500"/></svg>
<div class="a" style="left:393px;top:62.3px;width:6px;height:6px;background:#0a0a0a"></div>
<span class="t" style="left:402px;top:60.3px;font-size:9px;line-height:11px;color:#111;transform:scaleX(0.891);">Послою</span>
<div class="a cb" style="left:483.5px;top:58.8px;width:95px;height:13px;"></div><div class="a btn" style="left:567.0px;top:59.8px;width:10.5px;height:11px;"></div><svg class="a" style="left:569.3px;top:63.0px;" width="6" height="5" viewBox="0 0 6 5"><path d="M.8 .8l2.200 2.300 2.200-2.300" stroke="#3c5a9a" fill="none" stroke-width="1.500"/></svg>
<div class="a" style="left:486.5px;top:64.9px;width:35px;height:1px;background:#222"></div>
<span class="t" style="left:525.5px;top:60.3px;font-size:9px;line-height:11px;color:#111;transform:scaleX(0.830);">CO...UOUS</span>
<div class="a cb" style="left:583px;top:58.8px;width:75px;height:13px;"></div><div class="a btn" style="left:646.5px;top:59.8px;width:10.5px;height:11px;"></div><svg class="a" style="left:648.8px;top:63.0px;" width="6" height="5" viewBox="0 0 6 5"><path d="M.8 .8l2.200 2.300 2.200-2.300" stroke="#3c5a9a" fill="none" stroke-width="1.500"/></svg>
<div class="a" style="left:586px;top:64.9px;width:20.5px;height:1px;background:#222"></div>
<span class="t" style="left:610px;top:60.3px;font-size:9px;line-height:11px;color:#111;transform:scaleX(0.891);">Послою</span>
<div class="a cbd" style="left:661.5px;top:58.8px;width:71.3px;height:13px;"></div><svg class="a" style="left:723.8px;top:62.8px;" width="6" height="5" viewBox="0 0 6 5"><path d="M.8 .8l2.200 2.400 2.200-2.400" stroke="#b8b6a8" fill="none" stroke-width="1.300"/></svg>
<span class="t" style="left:668px;top:60.3px;font-size:9px;line-height:11px;color:#a9a695;transform:scaleX(0.948);">Поцветч</span>
<div class="a grip" style="left:4px;top:76.0px;width:3px;height:11px;"></div>
<div class="a tb" style="left:8.5px;top:74.8px;width:315px;height:13.5px;"></div>
<svg class="a" style="left:9.0px;top:75.15px;overflow:visible" width="12" height="12.5" viewBox="0 0 12 12"><path d="M2 1.5h3.5l1 .8v4l1.5.7v4l-2 .5-1-.7v-4l-3-.8z" stroke="#7d828b" fill="#e9ebee" stroke-width="1" /></svg>
<svg class="a" style="left:23.0px;top:75.15px;overflow:visible" width="12" height="12.5" viewBox="0 0 12 12"><path d="M1.5 3.5l2-2h7v7l-2 2h-7z" stroke="#7d828b" fill="#e9ebee" stroke-width="1" stroke-linejoin="round"/><path d="M1.5 3.5h7v7M8.5 3.5l2-2" stroke="#7d828b" fill="none" stroke-width="1" /></svg>
<svg class="a" style="left:36.5px;top:75.15px;overflow:visible" width="12" height="12.5" viewBox="0 0 12 12"><path d="M1.5 1.5l8.5 7.5-2 2h-6.5z" stroke="#7d828b" fill="#e9ebee" stroke-width="1" /><path d="M1.5 1.5l-.01 9" stroke="#7d828b" fill="none" stroke-width="1" /></svg>
<svg class="a" style="left:51.0px;top:75.15px;overflow:visible" width="12" height="12.5" viewBox="0 0 12 12"><path d="M6 1l4.5 8.5c-1 1.8-8 1.8-9 0z" stroke="#7d828b" fill="#e9ebee" stroke-width="1" /></svg>
<svg class="a" style="left:65.0px;top:75.15px;overflow:visible" width="12" height="12.5" viewBox="0 0 12 12"><circle cx="6" cy="6" r="4.8" stroke="#7d828b" fill="#e9ebee" stroke-width="1"/></svg>
<svg class="a" style="left:78.5px;top:75.15px;overflow:visible" width="12" height="12.5" viewBox="0 0 12 12"><rect x="1.5" y="1.5" width="9" height="9" stroke="#7d828b" fill="#e9ebee" stroke-width="1" rx="2.5"/></svg>
<svg class="a" style="left:92.5px;top:75.15px;overflow:visible" width="12" height="12.5" viewBox="0 0 12 12"><circle cx="6" cy="6" r="4.8" stroke="#7d828b" fill="#e9ebee" stroke-width="1"/><circle cx="6" cy="6" r="2" stroke="#7d828b" fill="#fff" stroke-width="1"/></svg>
<svg class="a" style="left:106.5px;top:75.15px;overflow:visible" width="12" height="12.5" viewBox="0 0 12 12"><path d="M6 1l5 7.5-4 2.5-6-2.5z" stroke="#7d828b" fill="#e9ebee" stroke-width="1" /><path d="M6 1l1 10" stroke="#7d828b" fill="none" stroke-width="0.7" /></svg>
<svg class="a" style="left:120.0px;top:75.15px;overflow:visible" width="12" height="12.5" viewBox="0 0 12 12"><path d="M2 2.5h8M2 4.5h8M2 6.5h8M2 8.5h8M2 10.5h8" stroke="#7d828b" fill="none" stroke-width="1.5" /></svg>
<svg class="a" style="left:134.5px;top:75.15px;overflow:visible" width="12" height="12.5" viewBox="0 0 12 12"><path d="M1 7.5l7-5 3 2.5-7 5z" stroke="#7d828b" fill="#e9ebee" stroke-width="1" /></svg>
<svg class="a" style="left:151.5px;top:75.15px;overflow:visible" width="12" height="12.5" viewBox="0 0 12 12"><path d="M1.5 3.5l2-2h7v7l-2 2h-7z" stroke="#2a7fd4" fill="#bfe0fa" stroke-width="1" /><path d="M1.5 3.5h7v7M8.5 3.5l2-2" stroke="#2a7fd4" fill="none" stroke-width="1" /><path d="M5 5.5v4M4 6.5l1-1.2 1 1.2" stroke="#124" fill="none" stroke-width="1" /></svg>
<svg class="a" style="left:165.5px;top:75.15px;overflow:visible" width="12" height="12.5" viewBox="0 0 12 12"><path d="M2 5l2-1.5h5.5v5l-2 1.5h-5.5z" stroke="#2a7fd4" fill="#bfe0fa" stroke-width="1" /><path d="M6 .5v3.5" stroke="#111" fill="none" stroke-width="1.2" /><circle cx="6" cy="1.2" r="0.9" stroke="#111" fill="#111" stroke-width="1"/><path d="M1 11h10" stroke="#2a7fd4" fill="none" stroke-width="1" /></svg>
<svg class="a" style="left:179.0px;top:75.15px;overflow:visible" width="12" height="12.5" viewBox="0 0 12 12"><path d="M2 4c0-3 8-3 8 0s-8 2-6 5" stroke="#3a8ad8" fill="none" stroke-width="1.3" /><rect x="5" y="8" width="3.3" height="3.3" stroke="#444" fill="#fff" stroke-width="0.8" rx="0"/></svg>
<svg class="a" style="left:192.5px;top:75.15px;overflow:visible" width="12" height="12.5" viewBox="0 0 12 12"><path d="M1.5 5c0-4 9-4 9 0v3c0 3-9 3-9 0z" stroke="#2a7fd4" fill="#bfe0fa" stroke-width="1" /><path d="M1.5 5c0 2.5 9 2.5 9 0" stroke="#2a7fd4" fill="none" stroke-width="1" /><path d="M2 1.5c1.5-1.5 4-1.5 5.5-.5" stroke="#333" fill="none" stroke-width="0.9" /></svg>
<svg class="a" style="left:206.0px;top:75.15px;overflow:visible" width="12" height="12.5" viewBox="0 0 12 12"><path d="M1 2h10l-1.5 6h-7z" stroke="#2a7fd4" fill="#bfe0fa" stroke-width="1" /><circle cx="6" cy="9" r="2" stroke="#444" fill="#fff" stroke-width="1"/></svg>
<svg class="a" style="left:224.0px;top:75.15px;overflow:visible" width="12" height="12.5" viewBox="0 0 12 12"><circle cx="4.3" cy="6" r="3.2" stroke="#3a8ad8" fill="#e6f2fd" stroke-width="0.9"/><circle cx="7.7" cy="6" r="3.2" stroke="#3a8ad8" fill="#e6f2fd" stroke-width="0.9"/><circle cx="4.3" cy="6" r="1.8" stroke="#3a8ad8" fill="none" stroke-width="0.6"/><circle cx="7.7" cy="6" r="1.8" stroke="#3a8ad8" fill="none" stroke-width="0.6"/></svg>
<svg class="a" style="left:238.0px;top:75.15px;overflow:visible" width="12" height="12.5" viewBox="0 0 12 12"><circle cx="4.3" cy="6" r="3.2" stroke="#3a8ad8" fill="#e6f2fd" stroke-width="0.9"/><circle cx="7.7" cy="6" r="3.2" stroke="#3a8ad8" fill="#fff" stroke-width="0.9"/><circle cx="4.3" cy="6" r="1.8" stroke="#3a8ad8" fill="none" stroke-width="0.6"/></svg>
<svg class="a" style="left:252.0px;top:75.15px;overflow:visible" width="12" height="12.5" viewBox="0 0 12 12"><circle cx="4.3" cy="6" r="3.2" stroke="#7a8290" fill="#fff" stroke-width="0.9"/><circle cx="7.7" cy="6" r="3.2" stroke="#7a8290" fill="#fff" stroke-width="0.9"/><path d="M6 3.300c1.500 1.200 1.500 4.200 0 5.400c-1.500-1.200-1.500-4.200 0-5.400z" stroke="#3a8ad8" fill="#bfe0fa" stroke-width="0.7" /></svg>
<svg class="a" style="left:268.0px;top:75.15px;overflow:visible" width="12" height="12.5" viewBox="0 0 12 12"><path d="M6 1l4.5 2.5v5l-4.5 2.5-4.5-2.5v-5z" stroke="#333" fill="#fff" stroke-width="1" /><path d="M6 6v-4.5" stroke="#36c" fill="none" stroke-width="1.2" /><path d="M6 6l-4 2.5" stroke="#c22" fill="none" stroke-width="1.2" /><path d="M6 6l4 2.5" stroke="#2a2" fill="none" stroke-width="1.2" /></svg>
<svg class="a" style="left:282.5px;top:75.15px;overflow:visible" width="12" height="12.5" viewBox="0 0 12 12"><circle cx="6" cy="6" r="4.6" stroke="#c83030" fill="none" stroke-width="1"/><ellipse cx="6" cy="6" rx="2" ry="4.600" stroke="#2a6fd0" fill="none" stroke-width="1"/><ellipse cx="6" cy="6" rx="4.600" ry="2" stroke="#2a9a2a" fill="none" stroke-width="1"/></svg>
<svg class="a" style="left:296.5px;top:75.15px;overflow:visible" width="12" height="12.5" viewBox="0 0 12 12"><path d="M1.500 2h3.500v5h5.500v3.500h-9z" stroke="#3a8ad8" fill="#cfe6fb" stroke-width="0.9" /><rect x="6" y="2.5" width="4" height="3.3" stroke="#666" fill="#eee" stroke-width="0.8" rx="0"/></svg>
<svg class="a" style="left:310.0px;top:75.15px;overflow:visible" width="12" height="12.5" viewBox="0 0 12 12"><rect x="1" y="1" width="4" height="4" stroke="#3a8ad8" fill="#d6eafc" stroke-width="0.9" rx="1"/><rect x="7" y="1" width="4" height="4" stroke="#3a8ad8" fill="#d6eafc" stroke-width="0.9" rx="1"/><rect x="1" y="7" width="4" height="4" stroke="#3a8ad8" fill="#d6eafc" stroke-width="0.9" rx="1"/><rect x="7" y="7" width="4" height="4" stroke="#3a8ad8" fill="#d6eafc" stroke-width="0.9" rx="1"/><rect x="4" y="4" width="4" height="4" stroke="#3a8ad8" fill="#fff" stroke-width="0.9" rx="1"/></svg>
<div class="a sep" style="left:149px;top:76.0px;width:1px;height:11px;"></div>
<div class="a sep" style="left:220.5px;top:76.0px;width:1px;height:11px;"></div>
<div class="a sep" style="left:266.5px;top:76.0px;width:1px;height:11px;"></div>
<div class="a grip" style="left:326px;top:76.0px;width:3px;height:11px;"></div>
<div class="a tb" style="left:330px;top:74.8px;width:41.5px;height:13.5px;"></div>
<svg class="a" style="left:330.5px;top:75.15px;overflow:visible" width="12" height="12.5" viewBox="0 0 12 12"><ellipse cx="6" cy="7" rx="5" ry="2" stroke="#333" fill="none" stroke-width="1.1"/><path d="M6 1v10M4.5 2.5l1.5-1.5 1.5 1.5M1 5.5l1 1.5" stroke="#333" fill="none" stroke-width="1" /></svg>
<svg class="a" style="left:344.5px;top:75.15px;overflow:visible" width="12" height="12.5" viewBox="0 0 12 12"><ellipse cx="6" cy="6" rx="5.2" ry="2.6" stroke="#555" fill="none" stroke-width="1" transform="rotate(-30 6 6)"/><circle cx="6" cy="6" r="2.6" stroke="#777" fill="#f2f2f2" stroke-width="1"/></svg>
<svg class="a" style="left:358.5px;top:75.15px;overflow:visible" width="12" height="12.5" viewBox="0 0 12 12"><ellipse cx="6" cy="6" rx="5.2" ry="2.6" stroke="#555" fill="none" stroke-width="1" transform="rotate(-30 6 6)"/><circle cx="6" cy="6" r="2.6" stroke="#777" fill="#ddd" stroke-width="1"/><path d="M8 9l2.5 1" stroke="#333" fill="none" stroke-width="1.2" /></svg>
<div class="a grip" style="left:373.5px;top:76.0px;width:3px;height:11px;"></div>
<div class="a tb" style="left:377.5px;top:74.8px;width:278px;height:13.5px;"></div>
<svg class="a" style="left:378.0px;top:75.15px;overflow:visible" width="12" height="12.5" viewBox="0 0 12 12"><rect x="1" y="1" width="6" height="6" stroke="#555" fill="#fff" stroke-width="1" rx="0"/><path d="M2 6l2-3 1.5 2 1-1" stroke="#555" fill="none" stroke-width="0.8" /><rect x="5" y="5.5" width="6" height="5.5" stroke="#345" fill="#d6e0ee" stroke-width="1" rx="0"/><rect x="6" y="8" width="4" height="2" stroke="#345" fill="#fff" stroke-width="0.6" rx="0"/></svg>
<svg class="a" style="left:395.5px;top:75.15px;overflow:visible" width="12" height="12.5" viewBox="0 0 12 12"><path d="M1.5 4l2.5-2.5h6.5v6.5l-2.5 2.5h-6.5z" stroke="#556" fill="#fbfbfb" stroke-width="1" stroke-linejoin="round"/><path d="M1.5 4h6.5v6.5M8 4l2.5-2.5" stroke="#556" fill="none" stroke-width="0.9" /><path d="M1.5 4l2.5-2.5h6.5l-2.5 2.5z" stroke="#556" fill="#fff" stroke-width="0.8" /></svg>
<svg class="a" style="left:409.5px;top:75.15px;overflow:visible" width="12" height="12.5" viewBox="0 0 12 12"><path d="M1.5 4l2.5-2.5h6.5v6.5l-2.5 2.5h-6.5z" stroke="#556" fill="#fbfbfb" stroke-width="1" stroke-linejoin="round"/><path d="M1.5 4h6.5v6.5M8 4l2.5-2.5" stroke="#556" fill="none" stroke-width="0.9" /><path d="M1.5 10.5l2.5-2.5h6.5l-2.5 2.5z" stroke="#556" fill="#4d5968" stroke-width="0.8" /></svg>
<svg class="a" style="left:423.5px;top:75.15px;overflow:visible" width="12" height="12.5" viewBox="0 0 12 12"><path d="M1.5 4l2.5-2.5h6.5v6.5l-2.5 2.5h-6.5z" stroke="#556" fill="#fbfbfb" stroke-width="1" stroke-linejoin="round"/><path d="M1.5 4h6.5v6.5M8 4l2.5-2.5" stroke="#556" fill="none" stroke-width="0.9" /><path d="M1.5 4l2.5-2.5v6.5l-2.5 2.5z" stroke="#556" fill="#fff" stroke-width="0.8" /></svg>
<svg class="a" style="left:437.0px;top:75.15px;overflow:visible" width="12" height="12.5" viewBox="0 0 12 12"><path d="M1.5 4l2.5-2.5h6.5v6.5l-2.5 2.5h-6.5z" stroke="#556" fill="#fbfbfb" stroke-width="1" stroke-linejoin="round"/><path d="M1.5 4h6.5v6.5M8 4l2.5-2.5" stroke="#556" fill="none" stroke-width="0.9" /><path d="M8 4l2.5-2.5v6.5l-2.5 2.5z" stroke="#556" fill="#fff" stroke-width="0.8" /></svg>
<svg class="a" style="left:451.0px;top:75.15px;overflow:visible" width="12" height="12.5" viewBox="0 0 12 12"><path d="M1.5 4l2.5-2.5h6.5v6.5l-2.5 2.5h-6.5z" stroke="#556" fill="#fbfbfb" stroke-width="1" stroke-linejoin="round"/><path d="M1.5 4h6.5v6.5M8 4l2.5-2.5" stroke="#556" fill="none" stroke-width="0.9" /><rect x="1.5" y="4" width="6.5" height="6.5" stroke="#556" fill="#7d8896" stroke-width="0.8" rx="0"/></svg>
<svg class="a" style="left:464.5px;top:75.15px;overflow:visible" width="12" height="12.5" viewBox="0 0 12 12"><path d="M1.5 4l2.5-2.5h6.5v6.5l-2.5 2.5h-6.5z" stroke="#556" fill="#fbfbfb" stroke-width="1" stroke-linejoin="round"/><path d="M1.5 4h6.5v6.5M8 4l2.5-2.5" stroke="#556" fill="none" stroke-width="0.9" /><rect x="4" y="1.5" width="6.5" height="6.5" stroke="#556" fill="#7d8896" stroke-width="0.8" rx="0"/><path d="M1.5 4h6.5v6.5h-6.5zM1.5 4l2.5-2.5M8 10.5l2.5-2.5M1.5 10.5l2.5-2.5" stroke="#556" fill="none" stroke-width="0.8" /></svg>
<svg class="a" style="left:482.0px;top:75.15px;overflow:visible" width="12" height="12.5" viewBox="0 0 12 12"><path d="M6 1l4.5 2.6v5l-4.5 2.6-4.5-2.6v-5z" stroke="#556" fill="#fbfbfb" stroke-width="1" stroke-linejoin="round"/><path d="M1.5 3.6l4.5 2.6 4.5-2.6M6 6.2v5" stroke="#556" fill="none" stroke-width="0.8" /><path d="M1.5 3.6l4.5 2.6v5l-4.5-2.6z" stroke="#556" fill="#59626e" stroke-width="0.6" /></svg>
<svg class="a" style="left:495.5px;top:75.15px;overflow:visible" width="12" height="12.5" viewBox="0 0 12 12"><path d="M6 1l4.5 2.6v5l-4.5 2.6-4.5-2.6v-5z" stroke="#556" fill="#fbfbfb" stroke-width="1" stroke-linejoin="round"/><path d="M1.5 3.6l4.5 2.6 4.5-2.6M6 6.2v5" stroke="#556" fill="none" stroke-width="0.8" /><path d="M10.5 3.6l-4.5 2.6v5l4.5-2.6z" stroke="#556" fill="#59626e" stroke-width="0.6" /></svg>
<svg class="a" style="left:509.0px;top:75.15px;overflow:visible" width="12" height="12.5" viewBox="0 0 12 12"><path d="M6 1l4.5 2.6v5l-4.5 2.6-4.5-2.6v-5z" stroke="#556" fill="#fbfbfb" stroke-width="1" stroke-linejoin="round"/><path d="M1.5 3.6l4.5 2.6 4.5-2.6M6 6.2v5" stroke="#556" fill="none" stroke-width="0.8" /><path d="M6 1l4.5 2.6-2.2 1.3-4.5-2.6z" stroke="#556" fill="#59626e" stroke-width="0.6" /></svg>
<svg class="a" style="left:523.0px;top:75.15px;overflow:visible" width="12" height="12.5" viewBox="0 0 12 12"><path d="M6 1l4.5 2.6v5l-4.5 2.6-4.5-2.6v-5z" stroke="#556" fill="#fbfbfb" stroke-width="1" stroke-linejoin="round"/><path d="M1.5 3.6l4.5 2.6 4.5-2.6M6 6.2v5" stroke="#556" fill="none" stroke-width="0.8" /><path d="M6 1l-4.5 2.6 2.2 1.3 4.5-2.6z" stroke="#556" fill="#59626e" stroke-width="0.6" /></svg>
<svg class="a" style="left:541.0px;top:75.15px;overflow:visible" width="12" height="12.5" viewBox="0 0 12 12"><rect x="1.5" y="3.5" width="9" height="7" stroke="#444" fill="#e4e4e4" stroke-width="1" rx="1"/><circle cx="6" cy="7" r="2.2" stroke="#444" fill="#fff" stroke-width="1"/><rect x="3" y="2" width="3" height="1.5" stroke="#444" fill="#ccc" stroke-width="0.7" rx="0"/><circle cx="9.5" cy="2.5" r="1.6" stroke="#b40" fill="#e8742a" stroke-width="0.5"/></svg>
<svg class="a" style="left:558.5px;top:75.15px;overflow:visible" width="12" height="12.5" viewBox="0 0 12 12"><circle cx="5" cy="5" r="3.5" stroke="#333" fill="#f4f4f4" stroke-width="1.2"/><path d="M7.5 7.5l3.5 3.5" stroke="#222" fill="none" stroke-width="2" /><path d="M3 5h4M3 5l1.5-1.5M3 5l1.5 1.5" stroke="#333" fill="none" stroke-width="0.9" /></svg>
<div class="a sep" style="left:392.5px;top:76.0px;width:1px;height:11px;"></div>
<div class="a sep" style="left:479.5px;top:76.0px;width:1px;height:11px;"></div>
<div class="a sep" style="left:536.5px;top:76.0px;width:1px;height:11px;"></div>
<div class="a sep" style="left:555.5px;top:76.0px;width:1px;height:11px;"></div>
<div class="a cbd" style="left:572px;top:75.1px;width:82.5px;height:13px;"></div><svg class="a" style="left:645.5px;top:79.1px;" width="6" height="5" viewBox="0 0 6 5"><path d="M.8 .8l2.200 2.400 2.200-2.400" stroke="#b8b6a8" fill="none" stroke-width="1.300"/></svg>
<div class="a grip" style="left:657.5px;top:76.0px;width:3px;height:11px;"></div>
<div class="a tb" style="left:661.5px;top:74.8px;width:90px;height:13.5px;"></div>
<svg class="a" style="left:662.5px;top:75.15px;overflow:visible" width="12" height="12.5" viewBox="0 0 12 12"><rect x="1" y="1" width="6.5" height="6.5" stroke="#555" fill="#fff" stroke-width="1" rx="0"/><circle cx="7.5" cy="7.5" r="3.5" stroke="#555" fill="#fff" stroke-width="1"/></svg>
<svg class="a" style="left:679.5px;top:75.15px;overflow:visible" width="12" height="12.5" viewBox="0 0 12 12"><circle cx="6" cy="6" r="5" stroke="#555" fill="#fff" stroke-width="1"/><path d="M2 3.5l4 6 4-6" stroke="#555" fill="none" stroke-width="0.9" /><path d="M2.5 3c2 1.5 5 1.5 7 0" stroke="#555" fill="none" stroke-width="0.8" /></svg>
<svg class="a" style="left:693.5px;top:75.15px;overflow:visible" width="12" height="12.5" viewBox="0 0 12 12"><circle cx="6" cy="6" r="5" stroke="#555" fill="#fff" stroke-width="1"/><path d="M2.5 3.5l3.5 5.5 3.5-5.5" stroke="#555" fill="none" stroke-width="0.9" /></svg>
<svg class="a" style="left:707.0px;top:75.15px;overflow:visible" width="12" height="12.5" viewBox="0 0 12 12"><defs><radialGradient id="gb" cx=".35" cy=".3" r=".8"><stop offset="0" stop-color="#8fd0ff"/><stop offset=".6" stop-color="#1f74d8"/><stop offset="1" stop-color="#0b3f96"/></radialGradient></defs><circle cx="6" cy="6" r="4.4" stroke="#1c58a8" fill="url(#gb)" stroke-width="0.5"/></svg>
<svg class="a" style="left:721.0px;top:75.15px;overflow:visible" width="12" height="12.5" viewBox="0 0 12 12"><defs><radialGradient id="go" cx=".4" cy=".3" r=".8"><stop offset="0" stop-color="#ffe070"/><stop offset=".45" stop-color="#f09a20"/><stop offset=".8" stop-color="#7a3fb0"/><stop offset="1" stop-color="#4a1f90"/></radialGradient></defs><circle cx="6" cy="6" r="4.4" stroke="#63308a" fill="url(#go)" stroke-width="0.5"/></svg>
<svg class="a" style="left:738.0px;top:75.15px;overflow:visible" width="12" height="12.5" viewBox="0 0 12 12"><circle cx="5.5" cy="5.5" r="4.5" stroke="#555" fill="#fff" stroke-width="1"/><rect x="7" y="7" width="4.5" height="4.5" stroke="#456" fill="#dfe6f0" stroke-width="0.9" rx="0"/><path d="M7 8.5h4.5" stroke="#456" fill="none" stroke-width="0.8" /></svg>
<div class="a sep" style="left:677px;top:76.0px;width:1px;height:11px;"></div>
<div class="a sep" style="left:735.5px;top:76.0px;width:1px;height:11px;"></div>
<div class="a griph" style="left:6px;top:92.5px;width:11px;height:3px;"></div>
<div class="a tbv" style="left:4.5px;top:96.5px;width:13.5px;height:250px;"></div>
<svg class="a" style="left:5.45px;top:96.7px;overflow:visible" width="11.5" height="12" viewBox="0 0 12 12"><path d="M1.5 10.5l9-9" stroke="#484848" fill="none" stroke-width="1" /><rect x="0.6" y="9.6" width="1.8" height="1.8" stroke="#484848" fill="#484848" stroke-width="0" rx="0"/><rect x="9.6" y="0.6" width="1.8" height="1.8" stroke="#484848" fill="#484848" stroke-width="0" rx="0"/></svg>
<svg class="a" style="left:5.45px;top:109.94px;overflow:visible" width="11.5" height="12" viewBox="0 0 12 12"><path d="M1 11l10-10" stroke="#484848" fill="none" stroke-width="1" /><rect x="2.1" y="8.1" width="1.8" height="1.8" stroke="#484848" fill="#484848" stroke-width="0" rx="0"/><rect x="8.1" y="2.1" width="1.8" height="1.8" stroke="#484848" fill="#484848" stroke-width="0" rx="0"/><path d="M1 9v2h2M9 1h2v2" stroke="#484848" fill="none" stroke-width="0.8" /></svg>
<svg class="a" style="left:5.45px;top:123.18px;overflow:visible" width="11.5" height="12" viewBox="0 0 12 12"><path d="M1.5 9.5h4a3 3 0 1 0 0-6" stroke="#484848" fill="none" stroke-width="1.1" /><rect x="0.6" y="8.6" width="1.8" height="1.8" stroke="#484848" fill="#484848" stroke-width="0" rx="0"/><rect x="4.6" y="8.6" width="1.8" height="1.8" stroke="#484848" fill="#484848" stroke-width="0" rx="0"/><path d="M4 2l1.5 1.5-1.5 1.5" stroke="#484848" fill="none" stroke-width="0.9" /></svg>
<svg class="a" style="left:5.45px;top:136.42px;overflow:visible" width="11.5" height="12" viewBox="0 0 12 12"><path d="M6 1l5 3.8-2 5.7h-6l-2-5.7z" stroke="#484848" fill="#fff" stroke-width="1" /></svg>
<svg class="a" style="left:5.45px;top:149.66px;overflow:visible" width="11.5" height="12" viewBox="0 0 12 12"><path d="M1.5 3l9-.5v6.5l-9 .5z" stroke="#484848" fill="#fff" stroke-width="1" /><rect x="0.6" y="8.6" width="1.8" height="1.8" stroke="#484848" fill="#484848" stroke-width="0" rx="0"/><rect x="9.6" y="1.6" width="1.8" height="1.8" stroke="#484848" fill="#484848" stroke-width="0" rx="0"/></svg>
<svg class="a" style="left:5.45px;top:162.9px;overflow:visible" width="11.5" height="12" viewBox="0 0 12 12"><path d="M1.5 10.5c0-5 3.5-8.5 9-9" stroke="#484848" fill="none" stroke-width="1.1" /><rect x="0.6" y="9.6" width="1.8" height="1.8" stroke="#484848" fill="#484848" stroke-width="0" rx="0"/><rect x="9.6" y="0.6" width="1.8" height="1.8" stroke="#484848" fill="#484848" stroke-width="0" rx="0"/><rect x="2.6" y="3.6" width="1.8" height="1.8" stroke="#484848" fill="#484848" stroke-width="0" rx="0"/></svg>
<svg class="a" style="left:5.45px;top:176.14px;overflow:visible" width="11.5" height="12" viewBox="0 0 12 12"><circle cx="6" cy="6" r="4.6" stroke="#484848" fill="#fff" stroke-width="1"/><path d="M6 6l2.5-2.5" stroke="#484848" fill="none" stroke-width="0.9" /><rect x="5.1" y="5.1" width="1.8" height="1.8" stroke="#484848" fill="#484848" stroke-width="0" rx="0"/></svg>
<svg class="a" style="left:5.45px;top:189.38px;overflow:visible" width="11.5" height="12" viewBox="0 0 12 12"><path d="M3 3a2 2 0 0 1 3-1 2 2 0 0 1 3.5 1 2 2 0 0 1 0 3.5 2 2 0 0 1-3 2 2 2 0 0 1-3.500-.5 2 2 0 0 1 0-5z" stroke="#484848" fill="#fff" stroke-width="1" /></svg>
<svg class="a" style="left:5.45px;top:202.62px;overflow:visible" width="11.5" height="12" viewBox="0 0 12 12"><path d="M1 10c2 0 2-7 5-7s1 5 5 .5" stroke="#484848" fill="none" stroke-width="1.1" /></svg>
<svg class="a" style="left:5.45px;top:215.86px;overflow:visible" width="11.5" height="12" viewBox="0 0 12 12"><ellipse cx="6" cy="6" rx="4.8" ry="3" stroke="#3c3c3c" fill="#fff"/><rect x="5.1" y="5.1" width="1.8" height="1.8" stroke="#484848" fill="#484848" stroke-width="0" rx="0"/></svg>
<svg class="a" style="left:5.45px;top:229.1px;overflow:visible" width="11.5" height="12" viewBox="0 0 12 12"><path d="M10 4.5a4.5 3 0 1 0-.5 4" stroke="#484848" fill="none" stroke-width="1.1" /><path d="M8 9.5l2-1-.5 2z" stroke="#484848" fill="#484848" stroke-width="0.5" /></svg>
<svg class="a" style="left:5.45px;top:242.34px;overflow:visible" width="11.5" height="12" viewBox="0 0 12 12"><path d="M1 4l3-2.500h4v5l-2 2h-5z" stroke="#484848" fill="#fff" stroke-width="0.9" /><rect x="5" y="6" width="4" height="4" stroke="#484848" fill="#fff" stroke-width="0.9" rx="0"/><path d="M8 9l3 2.5" stroke="#484848" fill="none" stroke-width="1.3" /></svg>
<svg class="a" style="left:5.45px;top:255.58px;overflow:visible" width="11.5" height="12" viewBox="0 0 12 12"><rect x="1.5" y="2.5" width="6" height="4.5" stroke="#484848" fill="#fff" stroke-width="1" rx="0"/><path d="M6 8l2.5-2.500 2.5 2.500-2.500 2.500z" stroke="#484848" fill="#fff" stroke-width="0.9" /></svg>
<svg class="a" style="left:5.45px;top:268.82px;overflow:visible" width="11.5" height="12" viewBox="0 0 12 12"><rect x="5.2" y="5.2" width="1.6" height="1.6" stroke="#484848" fill="#484848" stroke-width="0" rx="0"/></svg>
<svg class="a" style="left:5.45px;top:282.06px;overflow:visible" width="11.5" height="12" viewBox="0 0 12 12"><rect x="2" y="2" width="8" height="8" stroke="#484848" fill="#fff" stroke-width="1" rx="0"/><path d="M2 6l4-4M2 10l8-8M6 10l4-4M.5 2h11M.5 10h11M2 .5v11M10 .5v11" stroke="#484848" fill="none" stroke-width="0.7" /></svg>
<svg class="a" style="left:5.45px;top:295.3px;overflow:visible" width="11.5" height="12" viewBox="0 0 12 12"><defs><linearGradient id="gg" x1="0" y1="0" x2="0" y2="1"><stop offset="0" stop-color="#8a8a8a"/><stop offset="1" stop-color="#f4f4f4"/></linearGradient></defs><rect x="2" y="2" width="8" height="8" stroke="#484848" fill="url(#gg)" stroke-width="1" rx="0"/><path d="M.5 2h11M.5 10h11M2 .5v11M10 .5v11" stroke="#484848" fill="none" stroke-width="0.7" /></svg>
<svg class="a" style="left:5.45px;top:308.54px;overflow:visible" width="11.5" height="12" viewBox="0 0 12 12"><path d="M1.5 2h6l3 3v5.5h-9z" stroke="#484848" fill="#fff" stroke-width="1" /><circle cx="6" cy="6.5" r="2" stroke="#484848" fill="#eee" stroke-width="0.9"/></svg>
<svg class="a" style="left:5.45px;top:321.78px;overflow:visible" width="11.5" height="12" viewBox="0 0 12 12"><rect x="1" y="1.5" width="10" height="9.5" stroke="#484848" fill="#fff" stroke-width="1" rx="0"/><path d="M1 4h10M1 6.500h10M1 9h10M4.500 4v7M7.500 4v7" stroke="#484848" fill="none" stroke-width="0.7" /><rect x="1" y="1.5" width="10" height="2.5" stroke="#484848" fill="#bbb" stroke-width="0.7" rx="0"/></svg>
<svg class="a" style="left:5.45px;top:335.02px;overflow:visible" width="11.5" height="12" viewBox="0 0 12 12"><text x="6" y="11" font-family="Liberation Sans" font-size="13.5" fill="#222" text-anchor="middle">A</text></svg>
<div class="a griph" style="left:22.5px;top:92.5px;width:11px;height:3px;"></div>
<div class="a tbv" style="left:21px;top:96.5px;width:13.5px;height:224px;"></div>
<svg class="a" style="left:22.05px;top:96.7px;overflow:visible" width="11.5" height="12" viewBox="0 0 12 12"><path d="M2 10l1.500-3.500 5.500-5.500 2 2-5.500 5.500z" stroke="#a0522d" fill="#e8742a" stroke-width="0.6" /><path d="M2 10l1.500-3.500 2 2z" stroke="#733" fill="#c03020" stroke-width="0.4" /><path d="M1 11.500h9.500" stroke="#666" fill="none" stroke-width="0.8" /></svg>
<svg class="a" style="left:22.05px;top:109.94px;overflow:visible" width="11.5" height="12" viewBox="0 0 12 12"><circle cx="3" cy="3" r="1.8" stroke="#484848" fill="#fff" stroke-width="0.9"/><path d="M6 2.500c2 0 3 1 3.500 2.500M8.500 3.500l1 1.500 1.500-1" stroke="#484848" fill="none" stroke-width="0.8" /><circle cx="7" cy="8" r="2.3" stroke="#2a7fd4" fill="#cfe6fb" stroke-width="1.1"/><circle cx="9" cy="9.5" r="1.8" stroke="#2a7fd4" fill="#cfe6fb" stroke-width="1"/></svg>
<svg class="a" style="left:22.05px;top:123.18px;overflow:visible" width="11.5" height="12" viewBox="0 0 12 12"><path d="M5 1.500v9h-4z" stroke="#555" fill="#ddd" stroke-width="0.9" /><path d="M7 1.500v9h4z" stroke="#2a7fd4" fill="#9ccff5" stroke-width="0.9" /><path d="M6 .5v11" stroke="#555" fill="none" stroke-width="0.6" stroke-dasharray="1.5 1"/></svg>
<svg class="a" style="left:22.05px;top:136.42px;overflow:visible" width="11.5" height="12" viewBox="0 0 12 12"><path d="M1.500 11v-2.500c0-1.500 1.500-2.500 3-2.500h3c1.500 0 3 1 3 2.500v2.500z" stroke="#2a5fa8" fill="#cfe6fb" stroke-width="1" /><path d="M4 6v-2.500c0-2 4-2 4 0v2.500" stroke="#2a5fa8" fill="none" stroke-width="1" /></svg>
<svg class="a" style="left:22.05px;top:149.66px;overflow:visible" width="11.5" height="12" viewBox="0 0 12 12"><rect x="1.2" y="1.2" width="3.8" height="3.8" stroke="#3a8ad8" fill="#fff" stroke-width="1" rx="0"/><rect x="7" y="1.2" width="3.8" height="3.8" stroke="#3a8ad8" fill="#d6eafc" stroke-width="1" rx="0"/><rect x="1.2" y="7" width="3.8" height="3.8" stroke="#3a8ad8" fill="#d6eafc" stroke-width="1" rx="0"/><rect x="7" y="7" width="3.8" height="3.8" stroke="#3a8ad8" fill="#d6eafc" stroke-width="1" rx="0"/></svg>
<svg class="a" style="left:22.05px;top:162.9px;overflow:visible" width="11.5" height="12" viewBox="0 0 12 12"><path d="M6 .5v11M.5 6h11" stroke="#484848" fill="none" stroke-width="1.1" /><path d="M4.500 2.200l1.500-1.700 1.500 1.700M4.500 9.800l1.500 1.700 1.500-1.700M2.200 4.500l-1.700 1.500 1.700 1.500M9.800 4.500l1.700 1.500-1.700 1.500" stroke="#484848" fill="none" stroke-width="1" /></svg>
<svg class="a" style="left:22.05px;top:176.14px;overflow:visible" width="11.5" height="12" viewBox="0 0 12 12"><path d="M4 2.500a4.500 4.500 0 1 0 4-.3" stroke="#484848" fill="none" stroke-width="1.2" /><path d="M6.500 .5l2 1.800-2.500 1" stroke="#484848" fill="#484848" stroke-width="0.6" /></svg>
<svg class="a" style="left:22.05px;top:189.38px;overflow:visible" width="11.5" height="12" viewBox="0 0 12 12"><rect x="1.2" y="1.2" width="9.6" height="9.6" stroke="#3a8ad8" fill="#bfe0fa" stroke-width="1" rx="0"/><rect x="1.7" y="4.7" width="5.6" height="5.6" stroke="#3a8ad8" fill="#fff" stroke-width="0.9" rx="0"/><rect x="2.8" y="6.8" width="2.8" height="2.8" stroke="#666" fill="#e4e4e4" stroke-width="0.7" rx="0"/></svg>
<svg class="a" style="left:22.05px;top:202.62px;overflow:visible" width="11.5" height="12" viewBox="0 0 12 12"><path d="M2 1h4.500l3.500 9.500h-8z" stroke="#2a7fd4" fill="#fff" stroke-width="1.1" /><rect x="3.5" y="6.5" width="3" height="3" stroke="#484848" fill="#333" stroke-width="0.5" rx="0"/><path d="M6.500 8l2.500 0" stroke="#484848" fill="none" stroke-width="1" /></svg>
<svg class="a" style="left:22.05px;top:215.86px;overflow:visible" width="11.5" height="12" viewBox="0 0 12 12"><path d="M1 8h3.500M7 6h4" stroke="#2a7fd4" fill="none" stroke-width="1.2" /><path d="M4 10.500l4-9" stroke="#2a7fd4" fill="none" stroke-width="1.2" /><path d="M5 8l1.500-.5" stroke="#2a7fd4" fill="none" stroke-width="0.6" /></svg>
<svg class="a" style="left:22.05px;top:229.1px;overflow:visible" width="11.5" height="12" viewBox="0 0 12 12"><path d="M1 7h6" stroke="#2a7fd4" fill="none" stroke-width="1.2" stroke-dasharray="2.500 1"/><path d="M7.500 10.500l3-9" stroke="#2a7fd4" fill="none" stroke-width="1.3" /></svg>
<svg class="a" style="left:22.05px;top:242.34px;overflow:visible" width="11.5" height="12" viewBox="0 0 12 12"><path d="M2 2.500h7.500v7h-7.500" stroke="#484848" fill="none" stroke-width="1.1" /><rect x="8.6" y="1.6" width="1.8" height="1.8" stroke="#2a7fd4" fill="#2a7fd4" stroke-width="0" rx="0"/></svg>
<svg class="a" style="left:22.05px;top:255.58px;overflow:visible" width="11.5" height="12" viewBox="0 0 12 12"><path d="M4 2.500h-2.500v7.500h9v-7.500h-2.500" stroke="#484848" fill="none" stroke-width="1.1" /><rect x="3.1" y="1.6" width="1.8" height="1.8" stroke="#2a7fd4" fill="#2a7fd4" stroke-width="0" rx="0"/><rect x="7.1" y="1.6" width="1.8" height="1.8" stroke="#2a7fd4" fill="#2a7fd4" stroke-width="0" rx="0"/></svg>
<svg class="a" style="left:22.05px;top:268.82px;overflow:visible" width="11.5" height="12" viewBox="0 0 12 12"><path d="M1 6h3.500M7.500 6h3.500" stroke="#2a7fd4" fill="none" stroke-width="1.1" /><path d="M3.500 4.500l1.500 1.500-1.500 1.500M8.500 4.500l-1.500 1.500 1.500 1.500" stroke="#2a7fd4" fill="none" stroke-width="1" /></svg>
<svg class="a" style="left:22.05px;top:282.06px;overflow:visible" width="11.5" height="12" viewBox="0 0 12 12"><path d="M1.5 10.500v-5l4-4h5v9z" stroke="#445" fill="#f4f4f4" stroke-width="1" /><path d="M1.5 5.500l4-4" stroke="#2a7fd4" fill="none" stroke-width="1.3" /></svg>
<svg class="a" style="left:22.05px;top:295.3px;overflow:visible" width="11.5" height="12" viewBox="0 0 12 12"><path d="M1.5 10.500v-3.500a5.500 5.500 0 0 1 5.500-5.500h3.500v9z" stroke="#445" fill="#f4f4f4" stroke-width="1" /><path d="M1.5 7a5.500 5.500 0 0 1 5.500-5.500" stroke="#2a7fd4" fill="none" stroke-width="1.3" /></svg>
<svg class="a" style="left:22.05px;top:308.54px;overflow:visible" width="11.5" height="12" viewBox="0 0 12 12"><path d="M1 6l3-2.500 2 1v4l-3 2-2-1z" stroke="#2a7fd4" fill="#9ccff5" stroke-width="1" /><path d="M6.500 3l2.500-2 2 1.500v3l-2.500 1.500z" stroke="#2a7fd4" fill="#9ccff5" stroke-width="1" /><path d="M7 8l2-1 1.500 1v2.500l-2 1z" stroke="#2a7fd4" fill="#9ccff5" stroke-width="1" /></svg>
<div class="a griph" style="left:22.5px;top:323px;width:11px;height:3px;"></div>
<div class="a tbv" style="left:21px;top:327.5px;width:13.5px;height:113px;"></div>
<svg class="a" style="left:22.05px;top:327.5px;overflow:visible" width="11.5" height="12" viewBox="0 0 12 12"><rect x="1" y="1" width="7" height="5" stroke="#484848" fill="#ccc" stroke-width="0.9" rx="0"/><rect x="3.5" y="4" width="7.5" height="5" stroke="#484848" fill="#fff" stroke-width="0.9" rx="0"/><path d="M3.500 11h7.500" stroke="#484848" fill="none" stroke-width="0.8" /></svg>
<svg class="a" style="left:22.05px;top:345.5px;overflow:visible" width="11.5" height="12" viewBox="0 0 12 12"><path d="M1.5 .5v11M9.500 .5v11M.5 2h10M.5 9.500h8" stroke="#484848" fill="none" stroke-width="0.8" stroke-dasharray="1.2 .8"/><path d="M5 9l4.500-5 2 1.500-4.500 5z" stroke="#a40" fill="#e8742a" stroke-width="0.6" /><path d="M5 9l-.5 2.200 2.200-.7z" stroke="#333" fill="#eed" stroke-width="0.4" /></svg>
<svg class="a" style="left:22.05px;top:358.7px;overflow:visible" width="11.5" height="12" viewBox="0 0 12 12"><path d="M1 8a2 2 0 0 1 2-2.500 2.500 2.500 0 0 1 4.500-1 2 2 0 0 1 3 2.500" stroke="#484848" fill="#fff" stroke-width="1" /><path d="M1 8.500h9" stroke="#484848" fill="none" stroke-width="0.8" /><path d="M5 9l4.500-5 2 1.500-4.500 5z" stroke="#a40" fill="#e8742a" stroke-width="0.6" /><path d="M5 9l-.5 2.200 2.200-.7z" stroke="#333" fill="#eed" stroke-width="0.4" /></svg>
<svg class="a" style="left:22.05px;top:371.9px;overflow:visible" width="11.5" height="12" viewBox="0 0 12 12"><path d="M1 9c2-6 5-7 9-5" stroke="#484848" fill="none" stroke-width="1" /><path d="M1 10.500c3 0 4-1 6-1" stroke="#484848" fill="none" stroke-width="0.9" /><path d="M5 9l4.500-5 2 1.500-4.500 5z" stroke="#a40" fill="#e8742a" stroke-width="0.6" /><path d="M5 9l-.5 2.200 2.200-.7z" stroke="#333" fill="#eed" stroke-width="0.4" /></svg>
<svg class="a" style="left:22.05px;top:387.8px;overflow:visible" width="11.5" height="12" viewBox="0 0 12 12"><path d="M1 1.500l4.500 8 5.500-6" stroke="#484848" fill="none" stroke-width="0.9" /><path d="M1 1.500h5M2 3.500h5M3 5.500h5" stroke="#484848" fill="none" stroke-width="0.6" /><path d="M5 9l4.500-5 2 1.500-4.500 5z" stroke="#a40" fill="#e8742a" stroke-width="0.6" /><path d="M5 9l-.5 2.200 2.200-.7z" stroke="#333" fill="#eed" stroke-width="0.4" /></svg>
<svg class="a" style="left:22.05px;top:401.5px;overflow:visible" width="11.5" height="12" viewBox="0 0 12 12"><rect x="5" y="1" width="6" height="4.5" stroke="#456" fill="#cfdcec" stroke-width="0.9" rx="0"/><rect x="1" y="4.5" width="6" height="3.5" stroke="#484848" fill="#fff" stroke-width="0.9" rx="0"/><circle cx="5.5" cy="9.5" r="1.8" stroke="#484848" fill="#fff" stroke-width="0.9"/></svg>
<svg class="a" style="left:22.05px;top:414.9px;overflow:visible" width="11.5" height="12" viewBox="0 0 12 12"><path d="M1 1.500l4.500 8 5.500-6" stroke="#484848" fill="none" stroke-width="0.9" /><path d="M1 1.500h5M2 3.500h5" stroke="#484848" fill="none" stroke-width="0.6" /><path d="M6 8l2 2 3-4" stroke="#2a2" fill="none" stroke-width="1.3" /></svg>
<svg class="a" style="left:22.05px;top:428.1px;overflow:visible" width="11.5" height="12" viewBox="0 0 12 12"><rect x="1" y="1" width="4" height="4.5" stroke="#2a7fd4" fill="#fff" stroke-width="1" rx="0"/><path d="M6 3h4M8.500 1.500l1.500 1.500-1.500 1.500" stroke="#2a7fd4" fill="none" stroke-width="1.2" /><rect x="1" y="7" width="10" height="4" stroke="#2a7fd4" fill="#5b9bd8" stroke-width="0.8" rx="0"/><path d="M1 9h10M4.500 7v4M8 7v4" stroke="#fff" fill="none" stroke-width="0.6" /></svg>
<div class="a sep" style="left:22.3px;top:341.4px;width:11px;height:1px;"></div>
<div class="a sep" style="left:22.3px;top:385.2px;width:11px;height:1px;"></div>
<div class="a griph" style="left:676.5px;top:92.5px;width:11px;height:3px;"></div>
<div class="a tbv" style="left:675.2px;top:96.5px;width:13px;height:242.5px;"></div>
<svg class="a" style="left:676.2px;top:98.0px;overflow:visible" width="11" height="12" viewBox="0 0 12 12"><path d="M1 5.500h7" stroke="#484848" fill="none" stroke-width="1" /><rect x="0.6" y="4.6" width="1.8" height="1.8" stroke="#484848" fill="#484848" stroke-width="0" rx="0"/><circle cx="9" cy="5.5" r="1.8" stroke="#c8501a" fill="#fdd9b5" stroke-width="1"/></svg>
<svg class="a" style="left:676.2px;top:111.5px;overflow:visible" width="11" height="12" viewBox="0 0 12 12"><path d="M2 10v-5.500h5" stroke="#484848" fill="none" stroke-width="1" stroke-dasharray="1.5 1"/><rect x="1.1" y="9.1" width="1.8" height="1.8" stroke="#484848" fill="#484848" stroke-width="0" rx="0"/><circle cx="9" cy="4" r="1.7" stroke="#c8501a" fill="#fdd9b5" stroke-width="1"/></svg>
<svg class="a" style="left:676.2px;top:127.5px;overflow:visible" width="11" height="12" viewBox="0 0 12 12"><path d="M2.500 10l7-7.500" stroke="#555" fill="none" stroke-width="1" /><circle cx="9.5" cy="2.5" r="1.7" stroke="#c8501a" fill="#fdd9b5" stroke-width="1"/><circle cx="2.5" cy="10" r="1.3" stroke="#c8501a" fill="#fdd9b5" stroke-width="1"/></svg>
<svg class="a" style="left:676.2px;top:140.7px;overflow:visible" width="11" height="12" viewBox="0 0 12 12"><path d="M1.500 10.500l9-9" stroke="#444" fill="none" stroke-width="1" /><circle cx="6" cy="6" r="1.7" stroke="#c8501a" fill="#fdd9b5" stroke-width="1"/></svg>
<svg class="a" style="left:676.2px;top:154.0px;overflow:visible" width="11" height="12" viewBox="0 0 12 12"><path d="M1.500 1.500l9 9M10.500 1.500l-9 9" stroke="#444" fill="none" stroke-width="1" /><circle cx="6" cy="6" r="1.7" stroke="#c8501a" fill="#fdd9b5" stroke-width="1"/></svg>
<svg class="a" style="left:676.2px;top:167.0px;overflow:visible" width="11" height="12" viewBox="0 0 12 12"><path d="M1.500 1.500l3 3M7.500 7.500l3 3M10.500 1.500l-9 9" stroke="#444" fill="none" stroke-width="1" /><circle cx="6" cy="6" r="1.7" stroke="#c8501a" fill="#fdd9b5" stroke-width="1"/><path d="M10 .5l1.500 1.500M11.500 .5l-1.500 1.500" stroke="#c22" fill="none" stroke-width="0.7" /></svg>
<svg class="a" style="left:676.2px;top:180.7px;overflow:visible" width="11" height="12" viewBox="0 0 12 12"><path d="M.5 6h11" stroke="#333" fill="none" stroke-width="1" stroke-dasharray="1.5 1"/></svg>
<svg class="a" style="left:676.2px;top:196.0px;overflow:visible" width="11" height="12" viewBox="0 0 12 12"><circle cx="6" cy="6" r="4.8" stroke="#555" fill="#fff" stroke-width="1"/><circle cx="6" cy="6" r="1.8" stroke="#c8501a" fill="#fdd9b5" stroke-width="1"/></svg>
<svg class="a" style="left:676.2px;top:210.0px;overflow:visible" width="11" height="12" viewBox="0 0 12 12"><path d="M6 1.500l4.500 4.500-4.500 4.500-4.500-4.500z" stroke="#c8501a" fill="none" stroke-width="0.9" /><circle cx="6" cy="6" r="3.4" stroke="#555" fill="none" stroke-width="0.9"/><circle cx="6" cy="1.8" r="1.3" stroke="#c8501a" fill="#fdd9b5" stroke-width="1"/><circle cx="6" cy="10.2" r="1.3" stroke="#c8501a" fill="#fdd9b5" stroke-width="1"/><circle cx="1.8" cy="6" r="1.3" stroke="#c8501a" fill="#fdd9b5" stroke-width="1"/><circle cx="10.2" cy="6" r="1.3" stroke="#c8501a" fill="#fdd9b5" stroke-width="1"/></svg>
<svg class="a" style="left:676.2px;top:223.0px;overflow:visible" width="11" height="12" viewBox="0 0 12 12"><circle cx="6" cy="7" r="4.2" stroke="#555" fill="#f0f0f0" stroke-width="1"/><path d="M1 2.800h8" stroke="#444" fill="none" stroke-width="1" /><circle cx="5" cy="2.8" r="1.4" stroke="#c8501a" fill="#fdd9b5" stroke-width="1"/></svg>
<svg class="a" style="left:676.2px;top:240.8px;overflow:visible" width="11" height="12" viewBox="0 0 12 12"><path d="M6 1v8M1 9h10" stroke="#444" fill="none" stroke-width="1" /><circle cx="6" cy="9" r="1.7" stroke="#c8501a" fill="#fdd9b5" stroke-width="1"/></svg>
<svg class="a" style="left:676.2px;top:253.0px;overflow:visible" width="11" height="12" viewBox="0 0 12 12"><path d="M1.500 9l7-7.500M3.500 11l7-7.500" stroke="#333" fill="none" stroke-width="1.1" /></svg>
<svg class="a" style="left:676.2px;top:266.0px;overflow:visible" width="11" height="12" viewBox="0 0 12 12"><rect x="3" y="2" width="7" height="5" stroke="#555" fill="#e8e8e8" stroke-width="1" rx="1"/><circle cx="3" cy="8.5" r="1.5" stroke="#c8501a" fill="#fdd9b5" stroke-width="1"/><circle cx="8.5" cy="8.5" r="1.5" stroke="#555" fill="#fff" stroke-width="1"/></svg>
<svg class="a" style="left:676.2px;top:279.0px;overflow:visible" width="11" height="12" viewBox="0 0 12 12"><circle cx="6" cy="6" r="1.5" stroke="#c8501a" fill="#fdd9b5" stroke-width="1"/></svg>
<svg class="a" style="left:676.2px;top:294.8px;overflow:visible" width="11" height="12" viewBox="0 0 12 12"><path d="M1.500 10.500l9-8" stroke="#444" fill="none" stroke-width="1" /><circle cx="7.5" cy="5.5" r="1.6" stroke="#c8501a" fill="#fdd9b5" stroke-width="1"/><path d="M2 3l3.500 .5" stroke="#444" fill="none" stroke-width="0.9" /></svg>
<svg class="a" style="left:676.2px;top:310.0px;overflow:visible" width="11" height="12" viewBox="0 0 12 12"><path d="M2 11v-6a3 3 0 0 1 6 0v6h-2v-6a1 1 0 0 0-2 0v6z" stroke="#555" fill="#ccc" stroke-width="0.8" /><path d="M7.500 1l3.500 3.500M11 1l-3.500 3.500" stroke="#d22" fill="none" stroke-width="1.3" /></svg>
<svg class="a" style="left:676.2px;top:326.4px;overflow:visible" width="11" height="12" viewBox="0 0 12 12"><path d="M1.500 11v-6.500a4 4 0 0 1 8 0v6.500h-2.500v-6.500a1.500 1.500 0 0 0-3 0v6.500z" stroke="#6a1010" fill="#b02525" stroke-width="0.8" /><path d="M1.500 9h2.500M7 9h2.500" stroke="#fff" fill="none" stroke-width="1" /><circle cx="10.5" cy="10.5" r="0.8" stroke="#333" fill="#333" stroke-width="0"/></svg>
<div class="a sep" style="left:676.2px;top:125px;width:11px;height:1px;"></div>
<div class="a sep" style="left:676.2px;top:194px;width:11px;height:1px;"></div>
<div class="a sep" style="left:676.2px;top:237.5px;width:11px;height:1px;"></div>
<div class="a sep" style="left:676.2px;top:292.5px;width:11px;height:1px;"></div>
<div class="a sep" style="left:676.2px;top:308.5px;width:11px;height:1px;"></div>
<div class="a sep" style="left:676.2px;top:324px;width:11px;height:1px;"></div>
<div class="a griph" style="left:693px;top:92.5px;width:11px;height:3px;"></div>
<div class="a tbv" style="left:691.7px;top:96.5px;width:13px;height:294.5px;"></div>
<svg class="a" style="left:692.7px;top:98.0px;overflow:visible" width="11" height="12" viewBox="0 0 12 12"><path d="M1.500 .5v11M10.500 .5v11" stroke="#484848" fill="none" stroke-width="1" /><path d="M1.5 4h9.0" stroke="#484848" fill="none" stroke-width="0.9" /></svg>
<svg class="a" style="left:692.7px;top:112.0px;overflow:visible" width="11" height="12" viewBox="0 0 12 12"><path d="M2.500 2.500l7 7" stroke="#484848" fill="none" stroke-width="1" /><path d="M1 4.500l3.500-3.500M7.500 11l3.500-3.500" stroke="#484848" fill="none" stroke-width="1" /></svg>
<svg class="a" style="left:692.7px;top:124.5px;overflow:visible" width="11" height="12" viewBox="0 0 12 12"><path d="M1.500 10.500a8 8 0 0 1 8.500-8.500" stroke="#484848" fill="none" stroke-width="1" /><path d="M4 10.500a5 5 0 0 1 5.500-5.500" stroke="#484848" fill="none" stroke-width="1.5" /><rect x="9.1" y="1.1" width="1.8" height="1.8" stroke="#484848" fill="#484848" stroke-width="0" rx="0"/><rect x="0.6" y="9.6" width="1.8" height="1.8" stroke="#484848" fill="#484848" stroke-width="0" rx="0"/></svg>
<svg class="a" style="left:692.7px;top:137.6px;overflow:visible" width="11" height="12" viewBox="0 0 12 12"><path d="M1.500 11v-5.500h3v-3M6.500 11v-3.500h3v-3" stroke="#484848" fill="none" stroke-width="0.9" /><rect x="0.6" y="4.6" width="1.8" height="1.8" stroke="#2a7fd4" fill="#2a7fd4" stroke-width="0" rx="0"/><rect x="5.6" y="2.1" width="1.8" height="1.8" stroke="#2a7fd4" fill="#2a7fd4" stroke-width="0" rx="0"/><rect x="8.6" y="2.1" width="1.8" height="1.8" stroke="#2a7fd4" fill="#2a7fd4" stroke-width="0" rx="0"/><rect x="3.6" y="7.1" width="1.8" height="1.8" stroke="#2a7fd4" fill="#2a7fd4" stroke-width="0" rx="0"/></svg>
<svg class="a" style="left:692.7px;top:154.0px;overflow:visible" width="11" height="12" viewBox="0 0 12 12"><circle cx="6" cy="6" r="4.8" stroke="#484848" fill="#fff" stroke-width="0.9"/><path d="M6 6l-3.200-3.200" stroke="#484848" fill="none" stroke-width="1" /><path d="M2.500 4.500v-2h2" stroke="#484848" fill="none" stroke-width="0.8" /></svg>
<svg class="a" style="left:692.7px;top:167.0px;overflow:visible" width="11" height="12" viewBox="0 0 12 12"><path d="M1 7a6 6 0 0 1 9-4" stroke="#484848" fill="none" stroke-width="1" /><path d="M3 11l2-3-1.500-1 2.500-3" stroke="#484848" fill="none" stroke-width="0.9" /></svg>
<svg class="a" style="left:692.7px;top:179.5px;overflow:visible" width="11" height="12" viewBox="0 0 12 12"><circle cx="6" cy="6" r="4.8" stroke="#484848" fill="#fff" stroke-width="0.9"/><path d="M2.600 2.600l6.800 6.800" stroke="#484848" fill="none" stroke-width="1" /></svg>
<svg class="a" style="left:692.7px;top:192.5px;overflow:visible" width="11" height="12" viewBox="0 0 12 12"><path d="M1.500 10.500h9M1.500 10.500l6-8.500" stroke="#484848" fill="none" stroke-width="1" /><path d="M7 10.500a5.500 5.500 0 0 0-2.200-4.500" stroke="#484848" fill="none" stroke-width="0.9" /></svg>
<svg class="a" style="left:692.7px;top:209.0px;overflow:visible" width="11" height="12" viewBox="0 0 12 12"><path d="M1.500 .5v11M10.500 .5v11" stroke="#484848" fill="none" stroke-width="1" /><path d="M1.5 3h9.0" stroke="#484848" fill="none" stroke-width="0.9" /><path d="M6 5l-2 3h2l-1 3 3-4h-2l1-2z" stroke="#c80" fill="#f5d536" stroke-width="0.5" /></svg>
<svg class="a" style="left:692.7px;top:223.0px;overflow:visible" width="11" height="12" viewBox="0 0 12 12"><path d="M1.500 1v10M1.500 3.500h9M1.500 8h6M10.500 1.500v4M7.500 6v4" stroke="#484848" fill="none" stroke-width="0.9" /></svg>
<svg class="a" style="left:692.7px;top:236.4px;overflow:visible" width="11" height="12" viewBox="0 0 12 12"><path d="M1.500 1v10M6 1v10M10.500 1v10" stroke="#484848" fill="none" stroke-width="1" /><path d="M1.5 3.5h9.0" stroke="#484848" fill="none" stroke-width="0.9" /></svg>
<svg class="a" style="left:692.7px;top:249.6px;overflow:visible" width="11" height="12" viewBox="0 0 12 12"><path d="M1.500 .5v11M10.500 .5v11" stroke="#484848" fill="none" stroke-width="1" /><path d="M1.5 2.5h9.0" stroke="#484848" fill="none" stroke-width="0.9" /><path d="M1.5 9.5h9.0" stroke="#484848" fill="none" stroke-width="0.9" /><rect x="4" y="4" width="4" height="4" stroke="#c80" fill="#f0b030" stroke-width="0.6" rx="0"/><path d="M6 2.500v7" stroke="#484848" fill="none" stroke-width="0.7" /></svg>
<svg class="a" style="left:692.7px;top:262.8px;overflow:visible" width="11" height="12" viewBox="0 0 12 12"><path d="M6 .5v11" stroke="#484848" fill="none" stroke-width="1" /><path d="M1 6h3M8 6h3" stroke="#484848" fill="none" stroke-width="0.9" /><path d="M8.500 3.500l1.500 1.500M10 3.500l-1.500 1.500" stroke="#484848" fill="none" stroke-width="0.6" /></svg>
<svg class="a" style="left:692.7px;top:279.4px;overflow:visible" width="11" height="12" viewBox="0 0 12 12"><rect x="0.5" y="3" width="11" height="6" stroke="#484848" fill="#fff" stroke-width="1" rx="0"/><path d="M4.500 3v6M8.500 3v6" stroke="#484848" fill="none" stroke-width="0.8" /><circle cx="2.5" cy="6" r="1.2" stroke="#484848" fill="#333" stroke-width="1"/><path d="M10 4.500v3" stroke="#484848" fill="none" stroke-width="1" /></svg>
<svg class="a" style="left:692.7px;top:292.6px;overflow:visible" width="11" height="12" viewBox="0 0 12 12"><circle cx="6" cy="6" r="4.8" stroke="#484848" fill="#fff" stroke-width="0.9"/><path d="M6 4.500v3M4.500 6h3" stroke="#484848" fill="none" stroke-width="0.9" /></svg>
<svg class="a" style="left:692.7px;top:306.6px;overflow:visible" width="11" height="12" viewBox="0 0 12 12"><path d="M1.500 .5v11M10.500 .5v11" stroke="#484848" fill="none" stroke-width="1" /><path d="M1.5 3h9.0" stroke="#484848" fill="none" stroke-width="0.9" /><path d="M3.500 8l2 2.500 3.500-5" stroke="#2a2" fill="none" stroke-width="1.6" /></svg>
<svg class="a" style="left:692.7px;top:319.8px;overflow:visible" width="11" height="12" viewBox="0 0 12 12"><path d="M.5 8h3.500l1-4 2 7 1-3h3.500" stroke="#484848" fill="none" stroke-width="1" /></svg>
<svg class="a" style="left:692.7px;top:335.7px;overflow:visible" width="11" height="12" viewBox="0 0 12 12"><path d="M1.500 .5v8M8 .5v8M1.500 2.500h6.500" stroke="#484848" fill="none" stroke-width="0.8" /><path d="M5 9l4.500-5 2 1.500-4.500 5z" stroke="#a40" fill="#e8742a" stroke-width="0.6" /><path d="M5 9l-.5 2.200 2.200-.7z" stroke="#333" fill="#eed" stroke-width="0.4" /></svg>
<svg class="a" style="left:692.7px;top:349.0px;overflow:visible" width="11" height="12" viewBox="0 0 12 12"><path d="M1.500 1v9M10.500 1v9M1.500 9h9" stroke="#484848" fill="none" stroke-width="0.8" /><text x="6" y="7.500" font-family="Liberation Sans" font-size="8" fill="#222" text-anchor="middle">A</text></svg>
<svg class="a" style="left:692.7px;top:363.0px;overflow:visible" width="11" height="12" viewBox="0 0 12 12"><path d="M1.500 .5v9M10.500 .5v9M1.500 2.500h9" stroke="#484848" fill="none" stroke-width="0.9" /><path d="M4.500 8a2 2 0 1 1 3 .5M8 7v2h-2" stroke="#2a2" fill="none" stroke-width="1" /></svg>
<svg class="a" style="left:692.7px;top:377.4px;overflow:visible" width="11" height="12" viewBox="0 0 12 12"><path d="M1.500 2v8M10.500 2v8M1.500 8h9" stroke="#484848" fill="none" stroke-width="0.9" /><path d="M4 7l4-4 1.500 1.500-4 4z" stroke="#a40" fill="#e8742a" stroke-width="0.6" /><path d="M9 3.500l1.500-2" stroke="#630" fill="none" stroke-width="1.2" /></svg>
<div class="a sep" style="left:692.7px;top:152px;width:11px;height:1px;"></div>
<div class="a sep" style="left:692.7px;top:207px;width:11px;height:1px;"></div>
<div class="a sep" style="left:692.7px;top:277px;width:11px;height:1px;"></div>
<div class="a sep" style="left:692.7px;top:333.5px;width:11px;height:1px;"></div>
<div class="a sep" style="left:692.7px;top:376px;width:11px;height:1px;"></div>
<div class="a griph" style="left:708.5px;top:92.2px;width:11px;height:2.6px;"></div>
<div class="a" style="left:708.2px;top:95px;width:57.3px;height:444.5px;background:#e9e9e9;box-shadow:0 0 0 1px #444"></div>
<span class="t" style="left:708.9px;top:99.6px;font-size:9.3px;line-height:11.3px;color:#222;transform:scaleX(0.851);">AutoCAD</span>
<span class="t" style="left:709.3px;top:109.2px;font-size:14px;line-height:16px;color:#2a2a2a;transform:scaleX(0.762);">* * * *</span>
<span class="t" style="left:708.9px;top:122.39999999999999px;font-size:9.3px;line-height:11.3px;color:#222;transform:scaleX(0.902);">Вид:</span>
<span class="t" style="left:708.9px;top:145.2px;font-size:9.3px;line-height:11.3px;color:#222;transform:scaleX(0.921);">Список</span>
<span class="t" style="left:708.9px;top:156.6px;font-size:9.3px;line-height:11.3px;color:#222;transform:scaleX(0.915);">Удалить</span>
<span class="t" style="left:708.9px;top:168.0px;font-size:9.3px;line-height:11.3px;color:#222;transform:scaleX(0.911);">Восстан</span>
<span class="t" style="left:708.9px;top:179.39999999999998px;font-size:9.3px;line-height:11.3px;color:#222;transform:scaleX(0.920);">Сохранить</span>
<span class="t" style="left:708.9px;top:190.8px;font-size:9.3px;line-height:11.3px;color:#222;transform:scaleX(0.892);">Рамка</span>
<span class="t" style="left:708.9px;top:225.0px;font-size:9.3px;line-height:11.3px;color:#222;transform:scaleX(0.923);">Панорамирова</span>
<span class="t" style="left:708.9px;top:236.4px;font-size:9.3px;line-height:11.3px;color:#222;transform:scaleX(0.924);">Зумировать:</span>
<span class="t" style="left:708.9px;top:259.2px;font-size:9.3px;line-height:11.3px;color:#222;transform:scaleX(0.892);">ДиалВид:</span>
<span class="t" style="left:708.9px;top:270.6px;font-size:9.3px;line-height:11.3px;color:#222;transform:scaleX(0.900);">План:</span>
<span class="t" style="left:708.9px;top:282.0px;font-size:9.3px;line-height:11.3px;color:#222;transform:scaleX(0.941);">Двид:</span>
<div class="a" style="left:39px;top:92px;width:633px;height:448px;background:#ece9d8"></div>
<div class="a" style="left:39px;top:92px;width:619.2px;height:435px;background:#fff"></div>
<svg class="a" style="left:39px;top:92px;shape-rendering:auto" width="621" height="435" viewBox="39 92 621 435"><rect x="76.3" y="111.3" width="515.7" height="364.0" stroke="#111" stroke-width="1.5" fill="none"/><rect x="100.4" y="117.5" width="485.5" height="351.9" stroke="#111" stroke-width="1.1" fill="none"/><line x1="358.7" y1="449.8" x2="585.9" y2="449.8" stroke="#111" stroke-width="1.1"/><line x1="358.7" y1="449.8" x2="358.7" y2="469.4" stroke="#111" stroke-width="1.1"/><line x1="358.7" y1="459.4" x2="438.3" y2="459.4" stroke="#222" stroke-width="0.8"/><line x1="379.7" y1="449.8" x2="379.7" y2="469.4" stroke="#222" stroke-width="0.8"/><line x1="407.5" y1="449.8" x2="407.5" y2="469.4" stroke="#222" stroke-width="0.8"/><line x1="425.8" y1="449.8" x2="425.8" y2="469.4" stroke="#111" stroke-width="1.3"/><line x1="438.3" y1="449.8" x2="438.3" y2="469.4" stroke="#222" stroke-width="0.9"/><line x1="561.3" y1="449.8" x2="561.3" y2="469.4" stroke="#111" stroke-width="1.1"/><line x1="573.4" y1="449.8" x2="573.4" y2="469.4" stroke="#111" stroke-width="1.1"/><line x1="561.3" y1="459.4" x2="585.9" y2="459.4" stroke="#222" stroke-width="0.8"/><rect x="195" y="145" width="93.5" height="96.2" stroke="#222" stroke-width="0.9" fill="none"/><rect x="174.6" y="241.2" width="135.0" height="14.1" stroke="#222" stroke-width="0.9" fill="none"/><line x1="242.1" y1="145" x2="242.1" y2="455" stroke="#222" stroke-width="0.9"/><line x1="165.6" y1="175" x2="562.3" y2="175" stroke="#222" stroke-width="0.9"/><circle cx="242.1" cy="175" r="14.6" stroke="#222" stroke-width="0.9" fill="none"/><line x1="207.3" y1="145" x2="207.3" y2="255.3" stroke="#222" stroke-width="0.9" stroke-dasharray="4 2.5"/><line x1="276" y1="145" x2="276" y2="255.3" stroke="#222" stroke-width="0.9" stroke-dasharray="4 2.5"/><line x1="195" y1="153.8" x2="207.3" y2="153.8" stroke="#222" stroke-width="0.9" stroke-dasharray="4 2.5"/><line x1="276" y1="153.8" x2="288.5" y2="153.8" stroke="#222" stroke-width="0.9" stroke-dasharray="4 2.5"/><line x1="195" y1="197.5" x2="207.3" y2="197.5" stroke="#222" stroke-width="0.9" stroke-dasharray="4 2.5"/><line x1="276" y1="197.5" x2="288.5" y2="197.5" stroke="#222" stroke-width="0.9" stroke-dasharray="4 2.5"/><rect x="235.8" y="203.8" width="12.5" height="29.6" stroke="#222" stroke-width="0.9" fill="none" stroke-dasharray="1.6 1"/><line x1="195.5" y1="212.4" x2="177.7" y2="241.2" stroke="#222" stroke-width="0.9"/><line x1="288" y1="212.4" x2="305.7" y2="241.2" stroke="#222" stroke-width="0.9"/><line x1="168.3" y1="161" x2="168.3" y2="175" stroke="#222" stroke-width="0.9"/><path d="M167.200 171l1.100 4 1.100-4z" stroke="#222" stroke-width="0.6" fill="#222"/><line x1="315.4" y1="161" x2="315.4" y2="175" stroke="#222" stroke-width="0.9"/><path d="M314.300 171l1.100 4 1.100-4z" stroke="#222" stroke-width="0.6" fill="#222"/><line x1="452" y1="137" x2="452" y2="272.4" stroke="#333" stroke-width="1"/><circle cx="242.1" cy="351" r="67.7" stroke="#222" stroke-width="0.9" fill="none"/><circle cx="242.1" cy="351" r="46" stroke="#222" stroke-width="0.9" fill="none"/><circle cx="242.1" cy="351" r="34.1" stroke="#222" stroke-width="0.9" fill="none"/><line x1="133.2" y1="351" x2="362.6" y2="351" stroke="#222" stroke-width="0.9"/><line x1="235.8" y1="317.6" x2="235.8" y2="384.4" stroke="#222" stroke-width="0.9"/><line x1="248.3" y1="317.6" x2="248.3" y2="384.4" stroke="#222" stroke-width="0.9"/><circle cx="203" cy="311.5" r="4.9" stroke="#222" stroke-width="0.8" fill="none"/><line x1="198.8" y1="307.3" x2="207.2" y2="315.7" stroke="#222" stroke-width="0.8"/><line x1="198.8" y1="315.7" x2="207.2" y2="307.3" stroke="#222" stroke-width="0.8"/><circle cx="280.8" cy="311.5" r="4.9" stroke="#222" stroke-width="0.8" fill="none"/><line x1="276.6" y1="307.3" x2="285.0" y2="315.7" stroke="#222" stroke-width="0.8"/><line x1="276.6" y1="315.7" x2="285.0" y2="307.3" stroke="#222" stroke-width="0.8"/><circle cx="203" cy="390" r="4.9" stroke="#222" stroke-width="0.8" fill="none"/><line x1="198.8" y1="385.8" x2="207.2" y2="394.2" stroke="#222" stroke-width="0.8"/><line x1="198.8" y1="394.2" x2="207.2" y2="385.8" stroke="#222" stroke-width="0.8"/><circle cx="280.8" cy="390" r="4.9" stroke="#222" stroke-width="0.8" fill="none"/><line x1="276.6" y1="385.8" x2="285.0" y2="394.2" stroke="#222" stroke-width="0.8"/><line x1="276.6" y1="394.2" x2="285.0" y2="385.8" stroke="#222" stroke-width="0.8"/><rect x="177.3" y="343.6" width="18.5" height="14.7" stroke="#222" stroke-width="0.9" fill="none"/><rect x="288.4" y="343.6" width="18.4" height="14.7" stroke="#222" stroke-width="0.9" fill="none"/><line x1="227.2" y1="305.5" x2="227.2" y2="318.5" stroke="#222" stroke-width="0.9" stroke-dasharray="3.5 2.5"/><line x1="227.2" y1="383.5" x2="227.2" y2="396.5" stroke="#222" stroke-width="0.9" stroke-dasharray="3.5 2.5"/><line x1="257.2" y1="305.5" x2="257.2" y2="318.5" stroke="#222" stroke-width="0.9" stroke-dasharray="3.5 2.5"/><line x1="257.2" y1="383.5" x2="257.2" y2="396.5" stroke="#222" stroke-width="0.9" stroke-dasharray="3.5 2.5"/><line x1="198.8" y1="329" x2="215" y2="329" stroke="#222" stroke-width="0.9" stroke-dasharray="3.5 2.5"/><line x1="269" y1="329" x2="285.4" y2="329" stroke="#222" stroke-width="0.9" stroke-dasharray="3.5 2.5"/><line x1="198.8" y1="373" x2="215" y2="373" stroke="#222" stroke-width="0.9" stroke-dasharray="3.5 2.5"/><line x1="269" y1="373" x2="285.4" y2="373" stroke="#222" stroke-width="0.9" stroke-dasharray="3.5 2.5"/><line x1="439.2" y1="318.1" x2="533.7" y2="318.1" stroke="#222" stroke-width="0.9"/><rect x="418.5" y="413.9" width="135.2" height="15.2" stroke="#222" stroke-width="0.9" fill="none"/><circle cx="486.5" cy="348.3" r="14.8" stroke="#222" stroke-width="0.9" fill="none"/><rect x="480.4" y="376.4" width="12.0" height="30.5" stroke="#222" stroke-width="0.9" fill="none"/><path d="M439.2 318.100V326.100" stroke="#222" stroke-width="0.9" fill="none"/><path d="M439.6 326.100C441.5 335 445.5 342 445 349C444.5 358 441 364 440 370.500" stroke="#222" stroke-width="0.9" fill="none"/><path d="M439.2 370.500V413.900" stroke="#222" stroke-width="0.9" fill="none"/><path d="M453.3 326.100C457 332 460.5 340 460 349C459.5 358 456 365 453.3 369.500" stroke="#222" stroke-width="0.9" fill="none"/><path d="M450.5 326.100C453 335 454 356 450 369.500" stroke="#222" stroke-width="0.7" fill="none"/><line x1="452.3" y1="318.1" x2="452.3" y2="326.1" stroke="#222" stroke-width="0.8"/><line x1="454.4" y1="318.1" x2="454.4" y2="326.1" stroke="#222" stroke-width="0.8"/><line x1="441.5" y1="318.1" x2="441.5" y2="326.1" stroke="#222" stroke-width="0.6"/><line x1="439.2" y1="326.1" x2="453.5" y2="326.1" stroke="#222" stroke-width="0.7"/><line x1="440.5" y1="328.7" x2="455" y2="328.7" stroke="#222" stroke-width="0.7"/><line x1="441.5" y1="331.4" x2="456.5" y2="331.4" stroke="#222" stroke-width="0.7"/><line x1="442.5" y1="334.6" x2="458" y2="334.6" stroke="#222" stroke-width="0.7"/><line x1="444" y1="339.9" x2="459.8" y2="339.9" stroke="#222" stroke-width="0.7"/><line x1="445" y1="345.2" x2="460" y2="345.2" stroke="#222" stroke-width="0.7"/><line x1="445" y1="349.8" x2="460" y2="349.8" stroke="#222" stroke-width="0.7"/><line x1="444.5" y1="355.1" x2="459.5" y2="355.1" stroke="#222" stroke-width="0.7"/><line x1="443.5" y1="359.5" x2="458" y2="359.5" stroke="#222" stroke-width="0.7"/><line x1="442.3" y1="363.1" x2="456.5" y2="363.1" stroke="#222" stroke-width="0.7"/><line x1="441.3" y1="366.3" x2="455" y2="366.3" stroke="#222" stroke-width="0.7"/><line x1="440.5" y1="368.4" x2="454" y2="368.4" stroke="#222" stroke-width="0.7"/><line x1="439.2" y1="370.5" x2="453.3" y2="370.5" stroke="#222" stroke-width="0.7"/><line x1="452.3" y1="370.5" x2="452.3" y2="413.9" stroke="#222" stroke-width="0.8"/><line x1="454.4" y1="370.5" x2="454.4" y2="413.9" stroke="#222" stroke-width="1.1"/><line x1="441.5" y1="372" x2="441.5" y2="413.9" stroke="#222" stroke-width="0.6"/><line x1="460.7" y1="318.1" x2="460.7" y2="413.9" stroke="#222" stroke-width="0.7"/><line x1="462.2" y1="318.1" x2="462.2" y2="413.9" stroke="#222" stroke-width="0.7"/><line x1="468.1" y1="318.1" x2="468.1" y2="413.9" stroke="#222" stroke-width="0.7"/><line x1="473.4" y1="318.1" x2="473.4" y2="413.9" stroke="#222" stroke-width="0.7"/><line x1="439.2" y1="385.3" x2="422.3" y2="413.9" stroke="#222" stroke-width="0.9"/><line x1="423.1" y1="413.9" x2="423.1" y2="429.1" stroke="#222" stroke-width="0.7"/><line x1="438.5" y1="413.9" x2="438.5" y2="429.1" stroke="#222" stroke-width="0.7"/><line x1="441.7" y1="413.9" x2="441.7" y2="429.1" stroke="#222" stroke-width="0.7"/><line x1="443.8" y1="413.9" x2="443.8" y2="429.1" stroke="#222" stroke-width="0.7"/><line x1="445.2" y1="413.9" x2="445.2" y2="429.1" stroke="#222" stroke-width="0.7"/><line x1="446.6" y1="413.9" x2="446.6" y2="429.1" stroke="#222" stroke-width="0.7"/><line x1="448" y1="413.9" x2="448" y2="429.1" stroke="#222" stroke-width="0.7"/><line x1="449.4" y1="413.9" x2="449.4" y2="429.1" stroke="#222" stroke-width="0.7"/><line x1="450.8" y1="413.9" x2="450.8" y2="429.1" stroke="#222" stroke-width="0.7"/><line x1="452.3" y1="413.9" x2="452.3" y2="429.1" stroke="#222" stroke-width="0.7"/><line x1="454.4" y1="413.9" x2="454.4" y2="429.1" stroke="#222" stroke-width="0.7"/><line x1="460.7" y1="413.9" x2="460.7" y2="429.1" stroke="#222" stroke-width="0.7"/><line x1="462.2" y1="413.9" x2="462.2" y2="429.1" stroke="#222" stroke-width="0.7"/><line x1="473.4" y1="413.9" x2="473.4" y2="429.1" stroke="#222" stroke-width="0.7"/><path d="M533.8 318.100V326.100" stroke="#222" stroke-width="0.9" fill="none"/><path d="M533.4 326.100C531.5 335 527.5 342 528.0 349C528.5 358 532.0 364 533.0 370.500" stroke="#222" stroke-width="0.9" fill="none"/><path d="M533.8 370.500V413.900" stroke="#222" stroke-width="0.9" fill="none"/><path d="M519.7 326.100C516.0 332 512.5 340 513.0 349C513.5 358 517.0 365 519.7 369.500" stroke="#222" stroke-width="0.9" fill="none"/><path d="M522.5 326.100C520.0 335 519.0 356 523.0 369.500" stroke="#222" stroke-width="0.7" fill="none"/><line x1="520.7" y1="318.1" x2="520.7" y2="326.1" stroke="#222" stroke-width="0.8"/><line x1="518.6" y1="318.1" x2="518.6" y2="326.1" stroke="#222" stroke-width="0.8"/><line x1="531.5" y1="318.1" x2="531.5" y2="326.1" stroke="#222" stroke-width="0.6"/><line x1="533.8" y1="326.1" x2="519.5" y2="326.1" stroke="#222" stroke-width="0.7"/><line x1="532.5" y1="328.7" x2="518.0" y2="328.7" stroke="#222" stroke-width="0.7"/><line x1="531.5" y1="331.4" x2="516.5" y2="331.4" stroke="#222" stroke-width="0.7"/><line x1="530.5" y1="334.6" x2="515.0" y2="334.6" stroke="#222" stroke-width="0.7"/><line x1="529.0" y1="339.9" x2="513.2" y2="339.9" stroke="#222" stroke-width="0.7"/><line x1="528.0" y1="345.2" x2="513.0" y2="345.2" stroke="#222" stroke-width="0.7"/><line x1="528.0" y1="349.8" x2="513.0" y2="349.8" stroke="#222" stroke-width="0.7"/><line x1="528.5" y1="355.1" x2="513.5" y2="355.1" stroke="#222" stroke-width="0.7"/><line x1="529.5" y1="359.5" x2="515.0" y2="359.5" stroke="#222" stroke-width="0.7"/><line x1="530.7" y1="363.1" x2="516.5" y2="363.1" stroke="#222" stroke-width="0.7"/><line x1="531.7" y1="366.3" x2="518.0" y2="366.3" stroke="#222" stroke-width="0.7"/><line x1="532.5" y1="368.4" x2="519.0" y2="368.4" stroke="#222" stroke-width="0.7"/><line x1="533.8" y1="370.5" x2="519.7" y2="370.5" stroke="#222" stroke-width="0.7"/><line x1="520.7" y1="370.5" x2="520.7" y2="413.9" stroke="#222" stroke-width="0.8"/><line x1="518.6" y1="370.5" x2="518.6" y2="413.9" stroke="#222" stroke-width="1.1"/><line x1="531.5" y1="372" x2="531.5" y2="413.9" stroke="#222" stroke-width="0.6"/><line x1="512.3" y1="318.1" x2="512.3" y2="413.9" stroke="#222" stroke-width="0.7"/><line x1="510.8" y1="318.1" x2="510.8" y2="413.9" stroke="#222" stroke-width="0.7"/><line x1="504.9" y1="318.1" x2="504.9" y2="413.9" stroke="#222" stroke-width="0.7"/><line x1="499.6" y1="318.1" x2="499.6" y2="413.9" stroke="#222" stroke-width="0.7"/><line x1="533.8" y1="385.3" x2="550.7" y2="413.9" stroke="#222" stroke-width="0.9"/><line x1="549.9" y1="413.9" x2="549.9" y2="429.1" stroke="#222" stroke-width="0.7"/><line x1="534.5" y1="413.9" x2="534.5" y2="429.1" stroke="#222" stroke-width="0.7"/><line x1="531.3" y1="413.9" x2="531.3" y2="429.1" stroke="#222" stroke-width="0.7"/><line x1="529.2" y1="413.9" x2="529.2" y2="429.1" stroke="#222" stroke-width="0.7"/><line x1="527.8" y1="413.9" x2="527.8" y2="429.1" stroke="#222" stroke-width="0.7"/><line x1="526.4" y1="413.9" x2="526.4" y2="429.1" stroke="#222" stroke-width="0.7"/><line x1="525.0" y1="413.9" x2="525.0" y2="429.1" stroke="#222" stroke-width="0.7"/><line x1="523.6" y1="413.9" x2="523.6" y2="429.1" stroke="#222" stroke-width="0.7"/><line x1="522.2" y1="413.9" x2="522.2" y2="429.1" stroke="#222" stroke-width="0.7"/><line x1="520.7" y1="413.9" x2="520.7" y2="429.1" stroke="#222" stroke-width="0.7"/><line x1="518.6" y1="413.9" x2="518.6" y2="429.1" stroke="#222" stroke-width="0.7"/><line x1="512.3" y1="413.9" x2="512.3" y2="429.1" stroke="#222" stroke-width="0.7"/><line x1="510.8" y1="413.9" x2="510.8" y2="429.1" stroke="#222" stroke-width="0.7"/><line x1="499.6" y1="413.9" x2="499.6" y2="429.1" stroke="#222" stroke-width="0.7"/><line x1="486.5" y1="318.1" x2="486.5" y2="333.5" stroke="#222" stroke-width="0.8"/><line x1="486.5" y1="363.1" x2="486.5" y2="376.4" stroke="#222" stroke-width="0.8"/><line x1="486.5" y1="413.9" x2="486.5" y2="429.1" stroke="#222" stroke-width="0.8"/><line x1="608.3" y1="479" x2="608.3" y2="527" stroke="#444" stroke-width="1"/><line x1="581.7" y1="505.8" x2="634" y2="505.8" stroke="#444" stroke-width="1"/><rect x="604.2" y="501.7" width="8.2" height="8.2" stroke="#333" stroke-width="0.9" fill="none"/></svg>
<span class="t" style="left:161.2px;top:159.3px;font-size:10.5px;line-height:12.5px;color:#111;transform:scaleX(0.656);-webkit-text-stroke:0.35px #111;">A</span>
<span class="t" style="left:318.3px;top:159.3px;font-size:10.5px;line-height:12.5px;color:#111;transform:scaleX(0.656);-webkit-text-stroke:0.35px #111;">A</span>
<span class="t" style="left:318px;top:291.6px;font-size:10.5px;line-height:12.5px;color:#111;transform:scaleX(0.885);-webkit-text-stroke:0.35px #111;">A-A</span>
<span class="t" style="left:372px;top:120.4px;font-size:8.5px;line-height:10.5px;color:#111;font-weight:bold;transform:scaleX(0.776);-webkit-text-stroke:0.15px #111;">1&quot;</span>
<span class="t" style="left:390px;top:120.4px;font-size:8.5px;line-height:10.5px;color:#111;font-weight:bold;transform:scaleX(0.776);-webkit-text-stroke:0.15px #111;">2&quot;</span>
<span class="t" style="left:408.5px;top:120.4px;font-size:8.5px;line-height:10.5px;color:#111;font-weight:bold;transform:scaleX(0.776);-webkit-text-stroke:0.15px #111;">3&quot;</span>
<span class="t" style="left:427px;top:120.4px;font-size:8.5px;line-height:10.5px;color:#111;font-weight:bold;transform:scaleX(0.776);-webkit-text-stroke:0.15px #111;">4&quot;</span>
<span class="t" style="left:445px;top:120.4px;font-size:8.5px;line-height:10.5px;color:#111;font-weight:bold;transform:scaleX(0.776);-webkit-text-stroke:0.15px #111;">5&quot;</span>
<span class="t" style="left:463.6px;top:120.4px;font-size:8.5px;line-height:10.5px;color:#111;font-weight:bold;transform:scaleX(0.776);-webkit-text-stroke:0.15px #111;">6&quot;</span>
<span class="t" style="left:482.5px;top:120.4px;font-size:8.5px;line-height:10.5px;color:#111;font-weight:bold;transform:scaleX(0.776);-webkit-text-stroke:0.15px #111;">7&quot;</span>
<span class="t" style="left:500px;top:120.4px;font-size:8.5px;line-height:10.5px;color:#111;font-weight:bold;transform:scaleX(0.776);-webkit-text-stroke:0.15px #111;">8&quot;</span>
<span class="t" style="left:519px;top:120.4px;font-size:8.5px;line-height:10.5px;color:#111;font-weight:bold;transform:scaleX(0.776);-webkit-text-stroke:0.15px #111;">9&quot;</span>
<span class="t" style="left:536.6px;top:120.4px;font-size:8.5px;line-height:10.5px;color:#111;font-weight:bold;transform:scaleX(0.741);-webkit-text-stroke:0.15px #111;">10&quot;</span>
<span class="t" style="left:555.5px;top:120.4px;font-size:8.5px;line-height:10.5px;color:#111;font-weight:bold;transform:scaleX(0.768);-webkit-text-stroke:0.15px #111;">11&quot;</span>
<span class="t" style="left:573.8px;top:120.4px;font-size:8.5px;line-height:10.5px;color:#111;font-weight:bold;transform:scaleX(0.741);-webkit-text-stroke:0.15px #111;">12&quot;</span>
<span class="t" style="left:361px;top:451.3px;font-size:6.5px;line-height:8.5px;color:#111;font-weight:bold;transform:scaleX(0.488);-webkit-text-stroke:0.3px #111;">Разраб.</span>
<span class="t" style="left:361px;top:461.1px;font-size:6.5px;line-height:8.5px;color:#111;font-weight:bold;transform:scaleX(0.488);-webkit-text-stroke:0.3px #111;">Проб.</span>
<span class="t" style="left:381.3px;top:461.1px;font-size:6.5px;line-height:8.5px;color:#111;font-weight:bold;transform:scaleX(0.522);-webkit-text-stroke:0.3px #111;">Жилин Е.А.</span>
<span class="t" style="left:479.5px;top:454.6px;font-size:8.5px;line-height:10.5px;color:#111;transform:scaleX(0.708);-webkit-text-stroke:0.4px #111;">Разрезы</span>
<span class="t" style="left:563.2px;top:451.7px;font-size:6px;line-height:8px;color:#111;font-weight:bold;transform:scaleX(0.668);-webkit-text-stroke:0.3px #111;">Лит.</span>
<span class="t" style="left:575.3px;top:451.7px;font-size:6px;line-height:8px;color:#111;font-weight:bold;transform:scaleX(0.599);-webkit-text-stroke:0.3px #111;">Лист</span>
<div class="a" style="left:658.2px;top:92px;width:13px;height:435px;background:linear-gradient(90deg,#f0efe6,#fbfbf6 50%,#f3f2ea)"></div>
<div class="a sbtn" style="left:658.7px;top:93.2px;width:12px;height:11px;"></div><svg class="a" style="left:660.7px;top:94.7px;" width="8" height="8" viewBox="0 0 8 8"><path d="M1.500 5l2.500-2.700 2.500 2.700" stroke="#4d6185" fill="none" stroke-width="1.600"/></svg>
<div class="a sbtn" style="left:658.7px;top:514.8px;width:12px;height:11.4px;"></div><svg class="a" style="left:660.7px;top:516.5px;" width="8" height="8" viewBox="0 0 8 8"><path d="M1.500 3l2.500 2.700 2.500-2.700" stroke="#4d6185" fill="none" stroke-width="1.600"/></svg>
<div class="a sbtn" style="left:658.7px;top:391.3px;width:12px;height:12.2px;"></div><svg class="a" style="left:660.7px;top:393.40000000000003px;" width="8" height="8" viewBox="0 0 8 8"><path d="M2.500 3h3M2.500 4.500h3M2.500 6h3" stroke="#eef3ff" stroke-width=".8"/></svg>
<div class="a" style="left:39px;top:527px;width:633px;height:13px;background:#ece9d8"></div>
<div class="a" style="left:39px;top:527px;width:408.5px;height:1px;background:#8e8c80"></div>
<div class="a" style="left:447.5px;top:527.5px;width:210.7px;height:12px;background:linear-gradient(#f0efe6,#fbfbf6 50%,#f3f2ea)"></div>
<div class="a sbtn" style="left:452.5px;top:528px;width:11.3px;height:11px;"></div><svg class="a" style="left:454.15px;top:529.5px;" width="8" height="8" viewBox="0 0 8 8"><path d="M5 1.500l-2.700 2.500 2.700 2.500" stroke="#4d6185" fill="none" stroke-width="1.600"/></svg>
<div class="a sbtn" style="left:645.6px;top:528px;width:11.6px;height:11px;"></div><svg class="a" style="left:647.4px;top:529.5px;" width="8" height="8" viewBox="0 0 8 8"><path d="M3 1.500l2.700 2.500-2.700 2.500" stroke="#4d6185" fill="none" stroke-width="1.600"/></svg>
<div class="a sbtn" style="left:589px;top:528px;width:11.6px;height:11px;"></div><svg class="a" style="left:590.8px;top:529.5px;" width="8" height="8" viewBox="0 0 8 8"><path d="M3 2.500v3M4.500 2.500v3M6 2.500v3" stroke="#eef3ff" stroke-width=".8"/></svg>
<div class="a" style="left:41px;top:528.5px;width:10.8px;height:10.5px;background:#e9e6d6;border:1px solid #d6d2c0;border-left-color:#f6f5ee;border-top-color:#f6f5ee"></div>
<svg class="a" style="left:41.4px;top:529.3px;" width="10" height="9" viewBox="0 0 10 9"><path d="M2.500 1.500v6" stroke="#b9b6a4" stroke-width="1.200"/><path d="M7.500 1.500l-3.500 3 3.500 3z" fill="#b9b6a4"/></svg>
<div class="a" style="left:52.3px;top:528.5px;width:10.8px;height:10.5px;background:#e9e6d6;border:1px solid #d6d2c0;border-left-color:#f6f5ee;border-top-color:#f6f5ee"></div>
<svg class="a" style="left:52.699999999999996px;top:529.3px;" width="10" height="9" viewBox="0 0 10 9"><path d="M6.500 1.500l-3.500 3 3.500 3z" fill="#b9b6a4"/></svg>
<div class="a" style="left:63.6px;top:528.5px;width:10.8px;height:10.5px;background:#e9e6d6;border:1px solid #d6d2c0;border-left-color:#f6f5ee;border-top-color:#f6f5ee"></div>
<svg class="a" style="left:64.0px;top:529.3px;" width="10" height="9" viewBox="0 0 10 9"><path d="M3.500 1.500l3.500 3-3.500 3z" fill="#b9b6a4"/></svg>
<div class="a" style="left:74.9px;top:528.5px;width:10.8px;height:10.5px;background:#e9e6d6;border:1px solid #d6d2c0;border-left-color:#f6f5ee;border-top-color:#f6f5ee"></div>
<svg class="a" style="left:75.30000000000001px;top:529.3px;" width="10" height="9" viewBox="0 0 10 9"><path d="M7.500 1.500v6" stroke="#b9b6a4" stroke-width="1.200"/><path d="M2.500 1.500l3.500 3-3.500 3z" fill="#b9b6a4"/></svg>
<svg class="a" style="left:84px;top:527px;" width="92" height="13.5" viewBox="0 0 92 13.5"><path d="M1.500 .5L6 12.500H43.500L48.500 .5Z" fill="#fff" stroke="#555" stroke-width=".9"/><path d="M2 .5H48" stroke="#fff" stroke-width="1.400"/><path d="M48.500 .5L44.500 12.500H84L89.500 .5" fill="#ece9d8" stroke="#555" stroke-width=".9"/></svg>
<span class="t" style="left:93.5px;top:528.3px;font-size:9px;line-height:11px;color:#111;transform:scaleX(0.928);">Модель</span>
<span class="t" style="left:137px;top:528.3px;font-size:9px;line-height:11px;color:#111;transform:scaleX(0.843);">Layout1</span>
<div class="a" style="left:1px;top:540px;width:767.3px;height:2px;background:#484848"></div>
<div class="a" style="left:4px;top:542px;width:8.5px;height:36px;background:linear-gradient(90deg,#9a9a9a,#8a8a8a 60%,#7a7a7a);border-top:1px solid #bbb;border-left:1px solid #aaa"></div>
<div class="a" style="left:6px;top:543.5px;width:4.5px;height:2.5px;background:#5f5f5f"></div>
<div class="a" style="left:12.5px;top:542px;width:753px;height:36px;background:#fff"></div>
<div class="a" style="left:12.5px;top:564.3px;width:689.5px;height:1px;background:#c9c7ba"></div>
<span class="t" style="left:14px;top:544px;font-size:10px;line-height:12px;color:#111;font-family:'Liberation Mono',monospace;transform:scaleX(1.000);">Выполняется регенерация модели.</span>
<span class="t" style="left:14px;top:566.5px;font-size:10px;line-height:12px;color:#111;font-family:'Liberation Mono',monospace;transform:scaleX(1.000);">Команда:</span>
<div class="a" style="left:753.5px;top:542px;width:12px;height:22.5px;background:#f6f5ee"></div>
<div class="a sbtn" style="left:754px;top:543.8px;width:11px;height:9.7px;"></div><svg class="a" style="left:755.5px;top:544.65px;" width="8" height="8" viewBox="0 0 8 8"><path d="M1.500 5l2.500-2.700 2.500 2.700" stroke="#4d6185" fill="none" stroke-width="1.600"/></svg>
<div class="a sbtn" style="left:754px;top:554px;width:11px;height:9.7px;"></div><svg class="a" style="left:755.5px;top:554.85px;" width="8" height="8" viewBox="0 0 8 8"><path d="M1.500 3l2.500 2.700 2.500-2.700" stroke="#4d6185" fill="none" stroke-width="1.600"/></svg>
<div class="a" style="left:702px;top:564.5px;width:63.5px;height:13.5px;background:linear-gradient(#f0efe6,#fbfbf6 50%,#f3f2ea)"></div>
<div class="a" style="left:752px;top:564.5px;width:13.5px;height:13.5px;background:#ece9d8"></div>
<div class="a sbtn" style="left:703.8px;top:565.5px;width:11.4px;height:11.5px;"></div><svg class="a" style="left:705.5px;top:567.25px;" width="8" height="8" viewBox="0 0 8 8"><path d="M5 1.500l-2.700 2.500 2.700 2.500" stroke="#4d6185" fill="none" stroke-width="1.600"/></svg>
<div class="a sbtn" style="left:740px;top:565.5px;width:11.5px;height:11.5px;"></div><svg class="a" style="left:741.75px;top:567.25px;" width="8" height="8" viewBox="0 0 8 8"><path d="M3 1.500l2.700 2.500-2.700 2.500" stroke="#4d6185" fill="none" stroke-width="1.600"/></svg>
<div class="a sbtn" style="left:716px;top:565.5px;width:12.5px;height:11.5px;"></div><svg class="a" style="left:718.25px;top:567.25px;" width="8" height="8" viewBox="0 0 8 8"><path d="M3 2.500v3M4.500 2.500v3M6 2.500v3" stroke="#eef3ff" stroke-width=".8"/></svg>
<div class="a" style="left:1px;top:578px;width:767.3px;height:14.5px;background:linear-gradient(#5a5a5a 0,#868686 10%,#7a7a7a 50%,#6c6c6c 85%,#555 100%)"></div>
<span class="t" style="left:11px;top:580.3px;font-size:8.8px;line-height:10.8px;color:#111;transform:scaleX(0.826);">8624.6, -933.4, 0.0</span>
<div class="a st" style="left:87px;top:579px;width:18.2px;height:12.5px;"></div>
<span class="t" style="left:88.1px;top:580.3px;font-size:8.8px;line-height:10.8px;color:#141414;transform:scaleX(0.855);">ШАГ</span>
<div class="a st" style="left:107px;top:579px;width:29.2px;height:12.5px;"></div>
<span class="t" style="left:108.1px;top:580.3px;font-size:8.8px;line-height:10.8px;color:#141414;transform:scaleX(0.944);">СЕТКА</span>
<div class="a st on" style="left:138px;top:579px;width:25.2px;height:12.5px;"></div>
<span class="t" style="left:139.35px;top:580.3px;font-size:8.8px;line-height:10.8px;color:#141414;transform:scaleX(0.932);">ОРТО</span>
<div class="a st" style="left:165px;top:579px;width:50.2px;height:12.5px;"></div>
<span class="t" style="left:166.1px;top:580.3px;font-size:8.8px;line-height:10.8px;color:#141414;transform:scaleX(0.913);">ОТС-ПОЛЯР</span>
<div class="a st on" style="left:217px;top:579px;width:45.2px;height:12.5px;"></div>
<span class="t" style="left:217.85px;top:580.3px;font-size:8.8px;line-height:10.8px;color:#141414;transform:scaleX(0.930);">ПРИВЯЗКА</span>
<div class="a st" style="left:264px;top:579px;width:55.2px;height:12.5px;"></div>
<span class="t" style="left:264.85px;top:580.3px;font-size:8.8px;line-height:10.8px;color:#141414;transform:scaleX(0.936);">ОТС-ОБЪЕКТ</span>
<div class="a st" style="left:321px;top:579px;width:24.2px;height:12.5px;"></div>
<span class="t" style="left:322.1px;top:580.3px;font-size:8.8px;line-height:10.8px;color:#141414;transform:scaleX(0.926);">ДПСК</span>
<div class="a st" style="left:347px;top:579px;width:19.2px;height:12.5px;"></div>
<span class="t" style="left:348.35px;top:580.3px;font-size:8.8px;line-height:10.8px;color:#141414;transform:scaleX(0.885);">ДИН</span>
<div class="a st" style="left:368px;top:579px;width:19.2px;height:12.5px;"></div>
<span class="t" style="left:369.35px;top:580.3px;font-size:8.8px;line-height:10.8px;color:#141414;transform:scaleX(0.912);">ВЕС</span>
<div class="a st" style="left:389px;top:579px;width:13.2px;height:12.5px;"></div>
<span class="t" style="left:390.35px;top:580.3px;font-size:8.8px;line-height:10.8px;color:#141414;transform:scaleX(0.873);">БС</span>
<div class="a st" style="left:490px;top:579px;width:38.5px;height:12.5px;"></div>
<span class="t" style="left:491.5px;top:580.3px;font-size:8.8px;line-height:10.8px;color:#141414;transform:scaleX(0.964);">МОДЕЛЬ</span>
<div class="a st" style="left:529.25px;top:579px;width:12.5px;height:12.5px;"></div><svg class="a" style="left:530.25px;top:579.8px;overflow:visible" width="10.5" height="11" viewBox="0 0 12 12"><rect x="0.5" y="0.5" width="11" height="11" stroke="#555" fill="#eee" stroke-width="1" rx="0"/><path d="M2.500 9.500l6-6v6z" stroke="#333" fill="#333" stroke-width="0.5" /></svg>
<div class="a st" style="left:542.45px;top:579px;width:13.5px;height:12.5px;"></div><svg class="a" style="left:543.95px;top:579.8px;overflow:visible" width="10.5" height="11" viewBox="0 0 12 12"><rect x="0.5" y="0.5" width="11" height="11" stroke="#555" fill="#eee" stroke-width="1" rx="0"/><rect x="2" y="2" width="8" height="4.5" stroke="#333" fill="#fff" stroke-width="0.9" rx="0"/><path d="M2 9h3M7 9h3" stroke="#333" fill="none" stroke-width="1.4" /></svg>
<div class="a st" style="left:563.75px;top:579px;width:12.5px;height:12.5px;"></div><svg class="a" style="left:564.75px;top:579.8px;overflow:visible" width="10.5" height="11" viewBox="0 0 12 12"><path d="M2 8.500c0-2.500 2-3.500 4-3.500s4 1 4 3-2 3-4 3-4-.5-4-2.500z" stroke="#444" fill="#e8e8e8" stroke-width="1" /><path d="M8 5l3-2M9.500 .5v4M7.500 2.500h4" stroke="#333" fill="none" stroke-width="1" /></svg>
<div class="a st" style="left:577.25px;top:579px;width:12.5px;height:12.5px;"></div><svg class="a" style="left:578.25px;top:579.8px;overflow:visible" width="10.5" height="11" viewBox="0 0 12 12"><circle cx="4.8" cy="4.8" r="3.5" stroke="#333" fill="#f4f7fa" stroke-width="1.2"/><path d="M7.500 7.500l3.500 3.500" stroke="#222" fill="none" stroke-width="2" /></svg>
<div class="a st" style="left:589.75px;top:579px;width:12.5px;height:12.5px;"></div><svg class="a" style="left:590.75px;top:579.8px;overflow:visible" width="10.5" height="11" viewBox="0 0 12 12"><circle cx="6" cy="6" r="5" stroke="#555" fill="#f0f0f0" stroke-width="1"/><circle cx="6" cy="6" r="2.3" stroke="#555" fill="#fff" stroke-width="1"/><path d="M6 1v2.700M6 8.300v2.700M1 6h2.700M8.300 6h2.700" stroke="#555" fill="none" stroke-width="0.8" /></svg>
<div class="a st" style="left:602.25px;top:579px;width:12.5px;height:12.5px;"></div><svg class="a" style="left:603.25px;top:579.8px;overflow:visible" width="10.5" height="11" viewBox="0 0 12 12"><rect x="1.5" y="4" width="9" height="7" stroke="#444" fill="#eee" stroke-width="1" rx="1"/><path d="M5 6l3 1.800-3 1.800z" stroke="#333" fill="#333" stroke-width="0.3" /><rect x="1.5" y="1" width="2.5" height="2" stroke="#444" fill="#ddd" stroke-width="0.7" rx="0"/><rect x="5" y="1" width="2.5" height="2" stroke="#444" fill="#ddd" stroke-width="0.7" rx="0"/><rect x="8.5" y="1" width="2.5" height="2" stroke="#444" fill="#ddd" stroke-width="0.7" rx="0"/></svg>
<div class="a st" style="left:628.5px;top:579px;width:26.5px;height:12.5px;"></div>
<svg class="a" style="left:628.75px;top:579.8px;overflow:visible" width="9.5" height="11" viewBox="0 0 12 12"><path d="M6 1l-4.500 10h2l2.500-6 2.500 6h2z" stroke="#444" fill="#ddd" stroke-width="0.7" /><path d="M6 1v4" stroke="#444" fill="none" stroke-width="0.8" /></svg>
<span class="t" style="left:638.5px;top:580.3px;font-size:8.8px;line-height:10.8px;color:#141414;transform:scaleX(0.736);">1:1</span>
<svg class="a" style="left:648.5px;top:583.5px;" width="5" height="4" viewBox="0 0 5 4"><path d="M0 0h5l-2.500 3z" fill="#222"/></svg>
<div class="a st" style="left:655.25px;top:579px;width:12.5px;height:12.5px;"></div><svg class="a" style="left:656.25px;top:579.8px;overflow:visible" width="10.5" height="11" viewBox="0 0 12 12"><path d="M5 1.500l-4 9.500h1.800l2.200-5.500 2.200 5.500h1.800z" stroke="#444" fill="#ddd" stroke-width="0.7" /><circle cx="9" cy="8.5" r="1.8" stroke="#c80" fill="#f5d536" stroke-width="0.5"/></svg>
<div class="a st" style="left:668.75px;top:579px;width:12.5px;height:12.5px;"></div><svg class="a" style="left:669.75px;top:579.8px;overflow:visible" width="10.5" height="11" viewBox="0 0 12 12"><path d="M5.500 1.500l-4 9.500h1.800l2.200-5.500 2.200 5.500h1.800z" stroke="#888" fill="#ccc" stroke-width="0.7" /></svg>
<div class="a st" style="left:684.75px;top:579px;width:12.5px;height:12.5px;"></div><svg class="a" style="left:685.75px;top:579.8px;overflow:visible" width="10.5" height="11" viewBox="0 0 12 12"><circle cx="6" cy="6" r="3.6" stroke="#6e6e6e" fill="#f4f4f4" stroke-width="1.2"/><circle cx="6" cy="6" r="1.5" stroke="#6e6e6e" fill="#fff" stroke-width="0.9"/><path d="M6 .8v1.800M6 9.400v1.800M.8 6h1.800M9.400 6h1.800M2.300 2.300l1.300 1.300M8.400 8.400l1.300 1.300M2.300 9.700l1.300-1.300M8.400 3.600l1.300-1.300" stroke="#6e6e6e" fill="none" stroke-width="1.3" /></svg>
<div class="a st" style="left:698.75px;top:579px;width:12.5px;height:12.5px;"></div><svg class="a" style="left:699.75px;top:579.8px;overflow:visible" width="10.5" height="11" viewBox="0 0 12 12"><rect x="1" y="5.5" width="7" height="5.5" stroke="#444" fill="#ddd" stroke-width="1" rx="1"/><path d="M5 5.500v-2a2.200 2.200 0 0 1 4.500 0v1" stroke="#444" fill="none" stroke-width="1.3" /></svg>
<div class="a st" style="left:716.75px;top:579px;width:14.5px;height:12.5px;"></div><svg class="a" style="left:718.75px;top:579.8px;overflow:visible" width="10.5" height="11" viewBox="0 0 12 12"><rect x="1" y="1" width="10" height="8" stroke="#345" fill="#dfe8f2" stroke-width="1" rx="0"/><path d="M2.500 3h7M2.500 5h7M2.500 7h4" stroke="#567" fill="none" stroke-width="0.8" /><path d="M5.500 9l2 2 3.500-4.500" stroke="#2a2" fill="none" stroke-width="1.6" /></svg>
<div class="a st" style="left:734.5px;top:579px;width:5.5px;height:12.5px;"></div>
<svg class="a" style="left:735px;top:584px;" width="5" height="4" viewBox="0 0 5 4"><path d="M0 0h4.600l-2.300 3z" fill="#222"/></svg>
<div class="a st" style="left:740.0px;top:579px;width:13px;height:12.5px;"></div><svg class="a" style="left:741.25px;top:579.8px;overflow:visible" width="10.5" height="11" viewBox="0 0 12 12"><rect x="0.5" y="0.5" width="11" height="11" stroke="#444" fill="#fff" stroke-width="1" rx="0"/><rect x="0.5" y="0.5" width="11" height="2.5" stroke="#444" fill="#888" stroke-width="0.5" rx="0"/></svg>
<svg class="a" style="left:757px;top:583px;" width="8" height="8" viewBox="0 0 8 8"><g fill="#cfcfcf"><rect x="5.500" y="1" width="1.500" height="1.500"/><rect x="3" y="3.500" width="1.500" height="1.500"/><rect x="5.500" y="3.500" width="1.500" height="1.500"/><rect x=".5" y="6" width="1.500" height="1.500"/><rect x="3" y="6" width="1.500" height="1.500"/><rect x="5.500" y="6" width="1.500" height="1.500"/></g></svg>
<div class="a" style="left:0px;top:592.3px;width:769px;height:1.7px;background:#b9c9ee"></div>
<div class="a" style="left:0px;top:594px;width:769px;height:21px;background:linear-gradient(#4a8cf6 0,#2f6fe6 8%,#2562df 20%,#245edb 55%,#2159cf 85%,#1b48ac 100%)"></div>
<div class="a" style="left:0px;top:594px;width:67px;height:21px;background:linear-gradient(#7cc97c 0,#47a847 12%,#3c9c3c 50%,#318e31 85%,#226e22 100%);border-radius:0 9px 9px 0;box-shadow:1px 0 2px rgba(0,0,30,.5)"></div>
<svg class="a" style="left:6.3px;top:596.8px;" width="15.5" height="14.5" viewBox="0 0 11 11"><path d="M1 2.500c1.500-.8 3-.8 4.500 0l-.8 3.500c-1.500-.8-3-.8-4.500 0z" fill="#e8532f"/><path d="M6.300 2.800c1.500.8 3 .8 4.500 0l-.8 3.500c-1.500.8-3 .8-4.500 0z" fill="#6fc04a"/><path d="M.1 6.900c1.500-.8 3-.8 4.500 0l-.8 3.500c-1.500-.8-3-.8-4.500 0z" fill="#4f8ff0"/><path d="M5.400 7.200c1.500.8 3 .8 4.500 0l-.8 3.500c-1.500.8-3 .8-4.500 0z" fill="#f7c734"/></svg>
<span class="t" style="left:25px;top:595.3px;font-size:14.5px;line-height:16.5px;color:#fff;font-weight:bold;font-style:italic;transform:scaleX(0.866);text-shadow:1px 1px 1px rgba(0,0,0,.45);">пуск</span>
<div class="a" style="left:73px;top:596.5px;width:95px;height:17.5px;background:linear-gradient(#6aa6fa 0,#4289f4 14%,#3c82f0 70%,#3476e2);border-radius:2px;box-shadow:0 0 0 .6px rgba(20,50,140,.35)"></div>
<div class="a" style="left:169.5px;top:596.5px;width:95px;height:17.5px;background:linear-gradient(#2553b8,#1e49a8 50%,#2452b4);border-radius:2px;box-shadow:0 0 0 .6px rgba(20,50,140,.35)"></div>
<div class="a" style="left:266px;top:596.5px;width:95px;height:17.5px;background:linear-gradient(#6aa6fa 0,#4289f4 14%,#3c82f0 70%,#3476e2);border-radius:2px;box-shadow:0 0 0 .6px rgba(20,50,140,.35)"></div>
<svg class="a" style="left:79px;top:599px;" width="11.5" height="12.5" viewBox="0 0 11.5 12.5"><rect x=".5" y=".5" width="10" height="11" rx="1" fill="#fff" stroke="#c85a1c"/><rect x="2" y="2" width="7" height="4" fill="#2a62c0"/><path d="M2 8.500h7" stroke="#d8702c" stroke-width="1.600"/></svg>
<svg class="a" style="left:175.5px;top:599px;" width="11.5" height="12.5" viewBox="0 0 11.5 12.5"><path d="M5 1.500h2l3.500 8-2 1.300-.8-2-3.200 1.300-.8 1.700-2.200.7z" fill="#d61c1c"/><path d="M5.800 5l1 2.800-2.200.9z" fill="#c9d0e6"/></svg>
<svg class="a" style="left:271.5px;top:599.5px;" width="11" height="11.5" viewBox="0 0 11 11.5"><rect x=".5" y=".5" width="10" height="10.500" rx="1" fill="#f4f6fb" stroke="#5b79b8"/><path d="M2.500 3l1 5 1.500-3.500 1.500 3.500 1-5" stroke="#2a55b0" fill="none" stroke-width="1.300"/></svg>
<span class="t" style="left:93px;top:599.3px;font-size:9.5px;line-height:11.5px;color:#fff;transform:scaleX(0.934);">VIA HD Audio D...</span>
<span class="t" style="left:189px;top:599.3px;font-size:9.5px;line-height:11.5px;color:#fff;transform:scaleX(0.906);">AutoCAD 2009 ...</span>
<span class="t" style="left:285px;top:599.3px;font-size:9.5px;line-height:11.5px;color:#fff;transform:scaleX(0.812);">РИС К ЛЕКЦИЯ...</span>
<div class="a" style="left:662px;top:598px;width:14.5px;height:13px;background:#2a5cc9"></div>
<span class="t" style="left:664px;top:599.3px;font-size:9.5px;line-height:11.5px;color:#fff;transform:scaleX(0.795);">EN</span>
<div class="a" style="left:687.5px;top:594px;width:81.5px;height:21px;background:linear-gradient(#3fb0f4 0,#1a92e8 10%,#1590e8 50%,#1284dd 85%,#0f6fc0 100%);box-shadow:-1px 0 1px rgba(0,20,80,.3)"></div>
<svg class="a" style="left:682px;top:599.5px;" width="11" height="11" viewBox="0 0 11 11"><circle cx="5.500" cy="5.500" r="5" fill="#3f8ff4" stroke="#d8e8ff" stroke-width=".8"/><path d="M6.700 2.800l-2.700 2.700 2.700 2.700" stroke="#fff" fill="none" stroke-width="1.500"/></svg>
<svg class="a" style="left:694px;top:599px;" width="12" height="12" viewBox="0 0 12 12"><rect x="3.500" y="1" width="7" height="5.500" fill="#c8d4ea" stroke="#334" stroke-width=".8"/><rect x="1" y="4" width="7" height="5.500" fill="#7d8db8" stroke="#223" stroke-width=".8"/><path d="M2 11h6" stroke="#223" stroke-width="1.200"/></svg>
<svg class="a" style="left:707.5px;top:599px;" width="12" height="12" viewBox="0 0 12 12"><circle cx="6" cy="6" r="5.500" fill="#f08a1c" stroke="#c75a08" stroke-width=".6"/><path d="M8.500 7.500a3 3 0 1 1-.5-3.500" stroke="#fff" fill="none" stroke-width="1.700"/></svg>
<svg class="a" style="left:721px;top:598.5px;" width="11.5" height="13" viewBox="0 0 11.5 13"><rect x=".5" y=".5" width="10.500" height="12" rx="1" fill="#fff" stroke="#c85a1c"/><rect x="2" y="2" width="7.500" height="4" fill="#2a62c0"/><path d="M2 8.500h7.500M2 10.500h7.500" stroke="#d8702c" stroke-width="1.200"/></svg>
<span class="t" style="left:738px;top:599.3px;font-size:9.5px;line-height:11.5px;color:#fff;transform:scaleX(0.967);">22:43</span>
</div>
</body></html>
